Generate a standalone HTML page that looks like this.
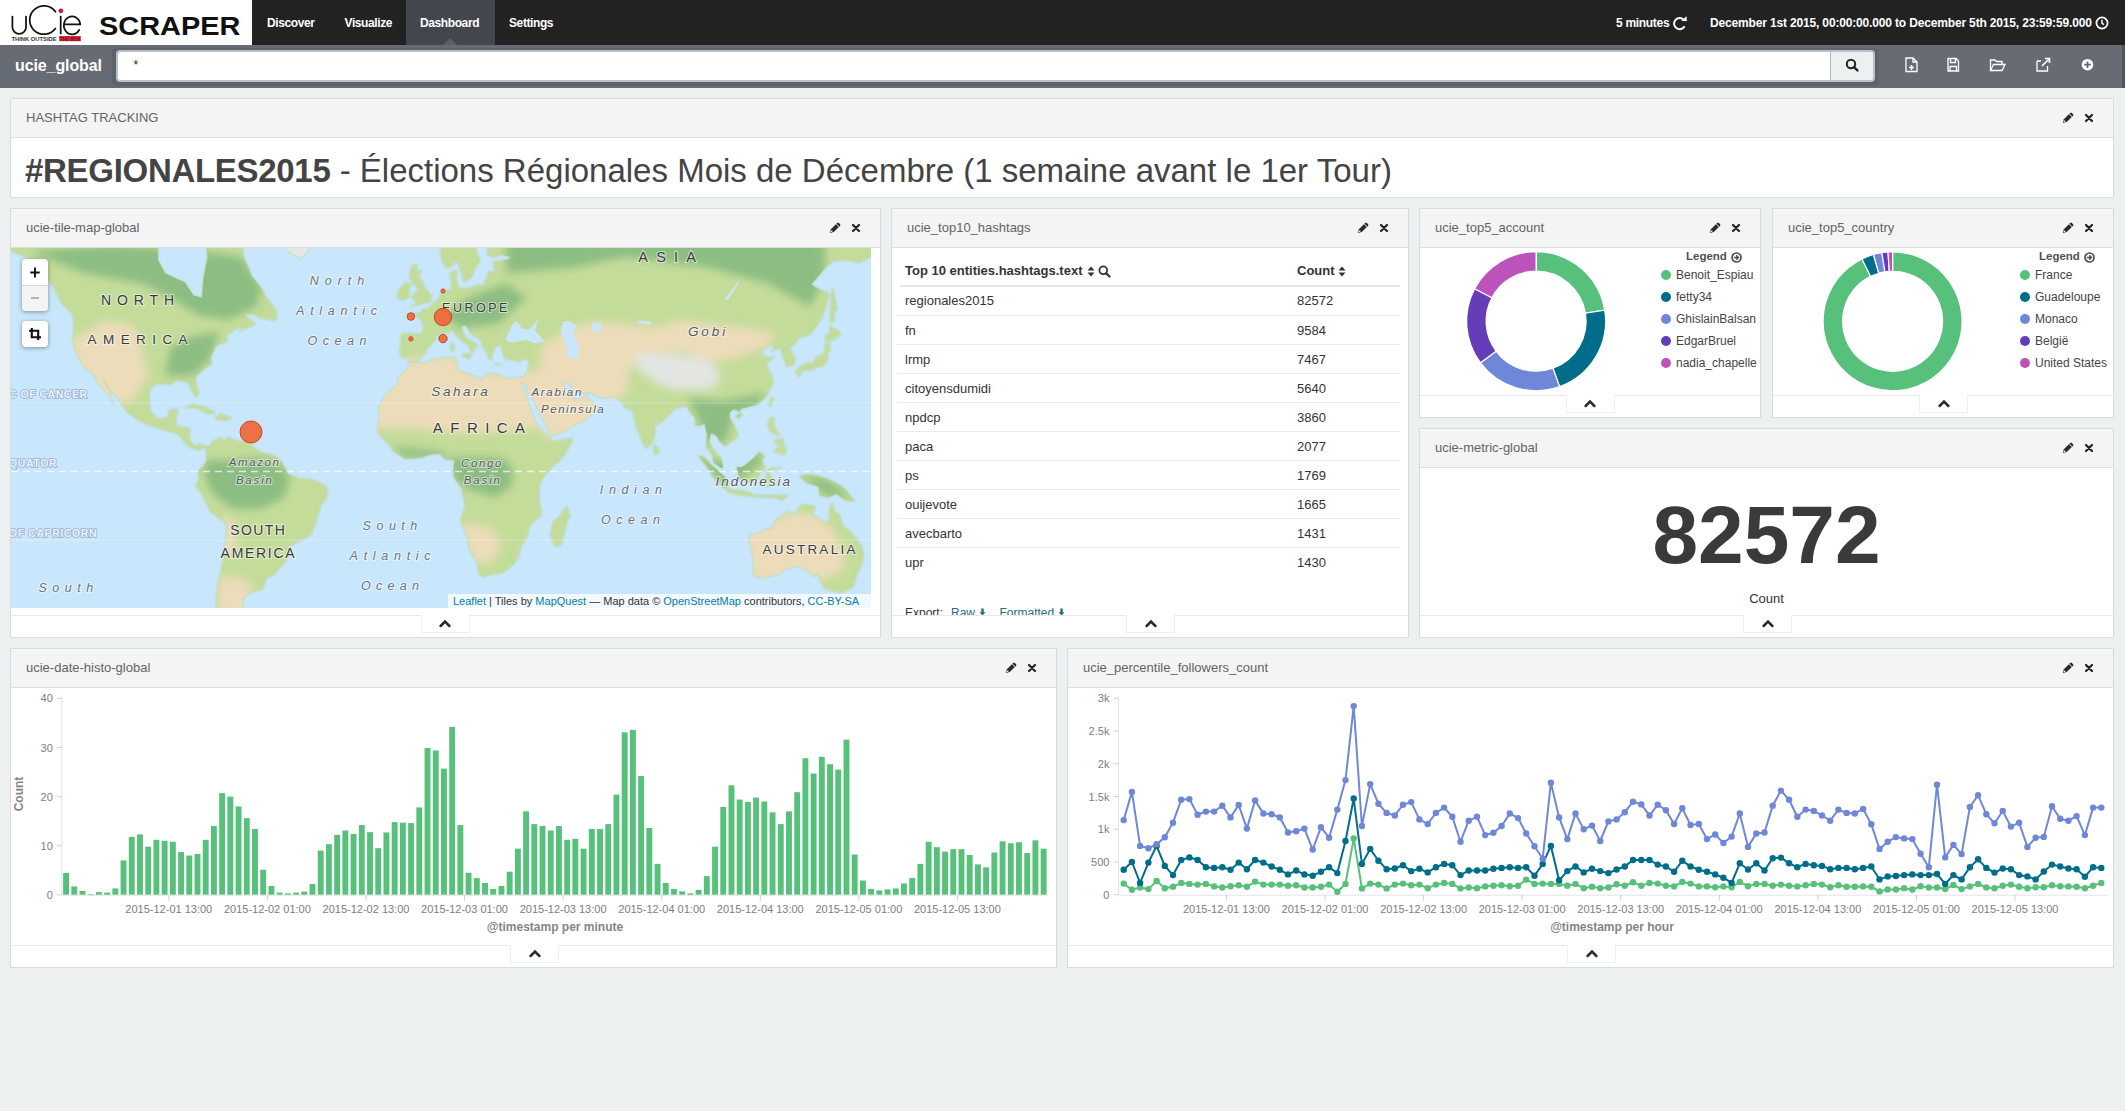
<!DOCTYPE html><html><head><meta charset="utf-8"><title>Kibana</title><style>

*{box-sizing:border-box}
html,body{margin:0;padding:0}
body{width:2125px;height:1111px;overflow:hidden;background:#ecf0f1;font-family:"Liberation Sans", sans-serif;position:relative;color:#444}
.a{position:absolute}
.nav{left:0;top:0;width:2125px;height:45px;background:#222}
.logo{left:0;top:0;width:252px;height:45px;background:#fff}
.ni{position:absolute;top:0.5px;height:45px;line-height:45px;color:#fff;font-weight:bold;font-size:12px;letter-spacing:-0.4px;white-space:nowrap}
.sub{left:0;top:45px;width:2125px;height:43px;background:#676b74}
.panel{position:absolute;background:#fff;border:1px solid #d9dcdd}
.ph{position:absolute;left:0;top:0;right:0;height:39px;background:#f4f4f4;border-bottom:1px solid #dcdfe0;box-shadow:inset 0 2px 0 #f6f8f8}
.pt{position:absolute;left:15px;top:11px;font-size:13px;color:#606466;white-space:nowrap}
.pic{position:absolute;top:13px;width:12px;height:12px;line-height:0}
.fline{position:absolute;left:0;right:0;height:1px;background:#e8eaea}
.ctab{position:absolute;width:49px;height:18px;background:#fff;border:1px solid #eef0f0;border-top:none;text-align:center;line-height:0;padding-top:4px}
.tbl{position:absolute;font-size:13px;color:#333}
.row{position:absolute;left:5px;width:499px;height:29px;border-top:1px solid #e6e8e8}
.row span{position:absolute;top:7px}
.lg{position:absolute;font-size:12px;color:#444;white-space:nowrap}
.dot{position:absolute;width:10px;height:10px;border-radius:5px}
.ax{font-family:"Liberation Sans", sans-serif;font-size:11px;fill:#7a7e81}

</style></head><body>
<div class="a nav"></div>
<div class="a logo">
<svg class="a" style="left:0;top:0" width="252" height="45" viewBox="0 0 252 45">
<g fill="none" stroke="#111" stroke-width="1.75" stroke-linecap="round">
<path d="M12.4 16.6 V27.2 A6.8 6.7 0 0 0 26 27.2 V16.6"/>
<path d="M55.5 11.8 A14.2 14.2 0 1 0 55.4 28.4"/>
<path d="M60.7 16.6 V33.6"/>
<path d="M63.9 24.3 H80.2 A8.2 9 0 1 0 79.2 29.8"/>
</g>
<circle cx="60.9" cy="10.8" r="2.4" fill="#c8202f"/>
<text x="11.4" y="40.7" font-family="Liberation Sans" font-size="5" font-weight="bold" textLength="45.3" lengthAdjust="spacingAndGlyphs" fill="#333">THINK OUTSIDE</text>
<rect x="59.2" y="36" width="21.6" height="5.2" fill="#d8293c"/>
<text x="59.8" y="40.6" font-family="Liberation Sans" font-size="4.8" font-weight="bold" fill="#7a0a14" textLength="20.4" lengthAdjust="spacingAndGlyphs">THE BOX</text>
<text x="99" y="34.6" font-family="Liberation Sans" font-weight="bold" font-size="26.5" textLength="141.5" lengthAdjust="spacingAndGlyphs" fill="#111">SCRAPER</text>
</svg>
</div>
<div class="a" style="left:406px;top:0;width:89px;height:45px;background:#43464d"></div>
<svg class="a" style="left:442px;top:38px" width="16" height="8"><path d="M0 8 L8 0 L16 8 Z" fill="#5b5f67"/></svg>
<div class="ni" style="left:267px">Discover</div>
<div class="ni" style="left:344.5px">Visualize</div>
<div class="ni" style="left:420px">Dashboard</div>
<div class="ni" style="left:509px">Settings</div>
<div class="ni" style="left:1616px;letter-spacing:-0.3px">5 minutes</div>
<svg class="a" style="left:1672px;top:15px" width="16" height="16" viewBox="0 0 16 16"><path d="M12.6 11.2 A5.6 5.6 0 1 1 11.6 4.6" fill="none" stroke="#fff" stroke-width="1.9"/><path d="M9.2 5.8 L14.8 6.2 L14.6 1.2 Z" fill="#fff"/></svg>
<div class="ni" style="left:1710px;letter-spacing:-0.16px">December 1st 2015, 00:00:00.000 to December 5th 2015, 23:59:59.000</div>
<svg class="a" style="left:2095px;top:16px" width="14" height="14" viewBox="0 0 14 14"><circle cx="7" cy="7" r="5.6" fill="none" stroke="#fff" stroke-width="1.7"/><path d="M7 3.8 V7.3 L9 8.6" fill="none" stroke="#fff" stroke-width="1.5"/></svg>
<div class="a sub"></div>
<div class="a" style="left:15px;top:57px;font-size:16px;font-weight:bold;color:#fff;letter-spacing:-0.1px;white-space:nowrap">ucie_global</div>
<div class="a" style="left:112px;top:48px;width:1767px;height:38px;background:#5e626a;border-radius:4px"></div>
<div class="a" style="left:116px;top:50px;width:1715px;height:32px;background:#fff;border:2px solid #bcc0c6;border-right:none;border-radius:4px 0 0 4px"></div>
<div class="a" style="left:133.5px;top:58px;font-size:12px;color:#222">*</div>
<div class="a" style="left:1830px;top:50px;width:45px;height:32px;background:#ecf0f1;border:2px solid #bcc0c6;border-left:1px solid #b5b9bf;border-radius:0 4px 4px 0"></div>
<svg class="a" style="left:1845px;top:58px" width="15" height="15" viewBox="0 0 15 15"><circle cx="6" cy="6" r="4.2" fill="none" stroke="#222" stroke-width="2"/><path d="M9 9 L12.5 12.5" stroke="#222" stroke-width="2.4" stroke-linecap="round"/></svg>
<svg class="a" style="left:1890px;top:45px" width="235" height="43" viewBox="0 0 235 43">
<g fill="none" stroke="#fff" stroke-width="1.3">
<path d="M16 13 H23 L27 17 V26.5 H16 Z"/><path d="M23 13 V17 H27"/><path d="M21.5 20 V25 M19 22.5 H24" stroke-width="1.6"/>
<path d="M58 13.5 H66 L68.5 16 V26 H58 Z"/><path d="M60.5 13.5 V17.5 H65.5 V13.5"/><path d="M60 26 V21.5 H66.5 V26"/>
<path d="M100.5 25.5 V15 H105 L106.5 16.5 H112 V19"/><path d="M100.5 25.5 L103.5 19.5 H115 L112 25.5 Z"/>
<path d="M147 16 H151 M147 16 V26 H157.5 V21"/><path d="M152 21 L159 14 M155 13.5 H159.5 V18" stroke-width="1.6"/>
</g>
<circle cx="197.5" cy="19.7" r="5.8" fill="#fff"/><path d="M197.5 16.5 V23 M194.2 19.7 H200.8" stroke="#636770" stroke-width="1.8"/>
<rect x="232" y="0" width="3" height="43" fill="#50545b"/>
</svg>
<div class="panel" style="left:10px;top:98px;width:2104px;height:100px"><div class="ph"><span class="pt">HASHTAG TRACKING</span><span class="pic" style="right:39px;top:12.7px"><svg width="12" height="12" viewBox="0 0 12 12"><path d="M0.9 11.1 L1.9 7.3 L7.6 1.6 L10.4 4.4 L4.7 10.1 Z" fill="#2a2a2a"/><path d="M8.3 0.9 Q9.1 0.2 9.8 0.9 L11.1 2.2 Q11.8 2.9 11.1 3.7 L10.4 4.4 L7.6 1.6 Z" fill="#2a2a2a"/><path d="M7.2 2.2 L9.8 4.8" stroke="#f3f4f4" stroke-width="0.8"/><circle cx="2.6" cy="9.3" r="0.9" fill="#f3f4f4"/></svg></span><span class="pic" style="right:17.5px;top:13.6px"><svg width="10" height="10" viewBox="0 0 10 10"><path d="M2 2 L8 8 M8 2 L2 8" stroke="#222" stroke-width="2.2" stroke-linecap="round"/></svg></span></div><div class="a" style="left:14px;top:53px;font-size:33px;color:#444;white-space:nowrap"><b style="letter-spacing:-0.3px">#REGIONALES2015</b> - Élections Régionales Mois de Décembre (1 semaine avant le 1er Tour)</div></div>
<div class="panel" style="left:10px;top:208px;width:871px;height:430px"><div class="ph"><span class="pt">ucie-tile-map-global</span><span class="pic" style="right:39px;top:12.7px"><svg width="12" height="12" viewBox="0 0 12 12"><path d="M0.9 11.1 L1.9 7.3 L7.6 1.6 L10.4 4.4 L4.7 10.1 Z" fill="#2a2a2a"/><path d="M8.3 0.9 Q9.1 0.2 9.8 0.9 L11.1 2.2 Q11.8 2.9 11.1 3.7 L10.4 4.4 L7.6 1.6 Z" fill="#2a2a2a"/><path d="M7.2 2.2 L9.8 4.8" stroke="#f3f4f4" stroke-width="0.8"/><circle cx="2.6" cy="9.3" r="0.9" fill="#f3f4f4"/></svg></span><span class="pic" style="right:17.5px;top:13.6px"><svg width="10" height="10" viewBox="0 0 10 10"><path d="M2 2 L8 8 M8 2 L2 8" stroke="#222" stroke-width="2.2" stroke-linecap="round"/></svg></span></div><svg class="a" style="left:0px;top:39px" width="860" height="360" viewBox="0 0 860 360">
<defs><filter id="bl" x="-10%" y="-10%" width="120%" height="120%"><feGaussianBlur stdDeviation="4"/></filter>
<filter id="bl2"><feGaussianBlur stdDeviation="1"/></filter>
<clipPath id="lc"><path d="M-11.0 -8.9L0.4 3.2L17.5 10.1L28.9 20.0L43.1 40.4L51.6 56.7L61.6 65.9L63.0 75.9L61.6 91.7L63.6 101.1L67.3 108.4L72.7 118.9L82.3 125.1L86.3 134.1L91.4 140.6L97.1 145.4L103.1 156.7L101.4 151.7L96.6 139.0L89.4 128.8L95.7 135.7L100.0 142.2L107.1 150.1L115.6 164.0L128.4 173.0L141.2 178.4L154.0 181.9L166.8 186.3L171.9 192.1L178.2 199.3L188.1 202.2L195.3 199.3L194.4 197.0L189.6 196.5L183.9 197.9L178.2 192.1L178.8 180.4L165.4 178.1L164.8 173.0L166.8 161.0L158.6 161.9L156.9 169.7L146.9 170.9L138.9 162.5L138.4 148.5L138.9 141.2L146.0 135.7L159.7 136.7L165.4 132.4L176.8 134.1L180.5 142.2L185.3 149.8L188.1 145.4L184.2 132.4L185.9 127.4L193.8 120.7L200.9 116.2L199.5 110.2L205.2 97.4L216.6 93.6L215.2 87.9L225.1 80.8L233.7 77.9L228.0 83.9L245.0 75.9L232.2 65.4L247.9 67.6L256.4 52.1L250.7 40.4L240.8 27.9L232.2 7.3L230.8 -8.9L193.8 -8.9L196.7 9.0L192.4 30.5L191.0 49.8L182.5 47.5L173.9 34.5L154.0 25.3L146.9 11.8L146.9 -8.9ZM246.5 69.3L264.9 73.0L265.5 63.3L257.8 51.7L250.7 56.7ZM267.8 -8.9L274.9 0.2L279.2 4.4L290.5 10.1L296.2 3.2L301.9 -8.9ZM173.9 159.7L182.5 156.0L195.3 159.4L204.6 164.9L195.3 165.8L186.7 160.0L175.3 160.0ZM203.8 170.0L208.9 165.8L221.4 169.7L213.7 172.7L204.4 170.9ZM195.3 199.3L199.5 197.0L200.9 193.6L210.9 189.2L212.3 193.6L216.6 189.2L228.0 193.3L239.3 193.3L242.2 199.3L250.7 204.2L262.1 207.1L269.2 211.4L273.5 218.8L277.7 226.4L289.1 230.7L301.9 231.6L316.1 238.7L316.1 249.3L309.6 258.0L304.8 274.2L300.5 286.2L293.4 290.9L280.6 297.1L277.5 308.2L270.6 318.1L263.5 326.5L255.0 330.0L252.1 341.3L238.8 344.2L230.8 351.7L232.2 356.6L225.1 371.3L222.3 388.3L219.4 411.7L205.2 411.7L200.9 379.6L205.2 359.3L206.6 337.0L212.3 313.1L215.2 290.9L216.0 277.2L199.5 263.8L191.0 246.4L184.7 237.8L188.1 230.7L186.7 223.6L191.6 218.5L195.8 212.2L195.3 203.6ZM398.9 114.4L412.9 115.5L424.2 110.9L444.1 109.5L447.0 122.4L458.4 126.4L471.2 132.4L472.6 127.4L481.1 125.1L498.2 131.1L507.6 130.1L513.8 129.1L515.0 135.7L509.0 134.7L512.4 142.2L516.7 153.2L521.5 168.5L526.6 178.1L533.7 184.8L538.9 189.8L543.7 193.6L561.3 189.8L560.8 193.6L552.2 209.4L540.9 219.3L532.3 229.3L528.1 237.8L528.1 253.6L530.9 266.8L518.1 278.4L516.7 287.8L509.0 299.9L508.1 308.2L502.5 316.4L492.5 324.8L479.7 326.5L472.6 329.3L468.0 326.2L465.5 313.1L458.4 301.8L456.7 289.3L449.3 272.7L454.1 258.0L450.7 240.7L442.7 229.3L442.7 216.5L443.6 212.2L434.2 211.4L428.5 205.6L418.5 206.8L410.0 209.9L394.4 211.1L383.0 203.9L377.3 196.5L367.9 186.3L365.9 181.3L369.6 167.0L367.3 161.6L374.5 147.0L387.3 135.7L388.1 129.1L396.4 120.7ZM555.9 258.0L559.3 268.2L556.5 272.7L550.0 296.8L543.7 298.7L539.4 287.8L541.7 274.2L548.0 268.8ZM429.6 -8.9L429.9 9.0L431.6 14.6L435.6 20.0L439.9 18.9L445.6 12.9L448.4 18.4L451.3 28.9L452.7 33.5L456.4 33.0L462.1 27.4L463.5 21.1L469.2 12.9L465.5 4.4L465.2 -8.9ZM476.9 -8.9L476.3 6.1L481.1 9.5L491.1 6.7L500.7 9.5L495.3 11.8L482.5 13.5L482.5 18.4L484.8 24.3L476.9 23.2L475.4 30.5L472.0 38.4L468.3 36.5L456.1 40.4L447.0 40.4L446.7 35.5L444.7 30.5L445.9 21.6L438.7 25.3L440.2 33.0L440.2 36.0L440.7 41.4L435.6 42.8L429.4 45.6L427.1 51.7L422.8 54.0L420.3 58.0L415.7 61.1L411.7 60.6L411.1 65.0L402.3 65.4L408.6 70.5L412.3 75.9L411.4 85.9L404.3 85.9L392.9 85.1L389.2 87.9L390.7 93.6L388.7 103.7L390.4 110.2L394.7 109.5L398.6 113.0L400.3 113.4L409.4 111.2L414.3 105.9L416.3 100.7L424.8 92.1L424.5 87.5L429.4 86.3L437.0 84.7L441.3 82.4L445.6 87.9L450.7 92.9L456.9 97.0L460.9 104.8L462.9 103.3L464.6 97.8L468.3 98.9L461.2 93.6L455.5 89.8L450.7 82.0L450.7 78.3L454.7 77.5L459.8 85.9L470.9 92.5L470.9 98.1L475.4 104.8L477.4 110.9L481.1 111.9L481.1 106.6L484.0 99.3L489.7 96.3L490.2 98.1L491.1 103.0L493.4 110.2L496.2 111.2L502.5 112.3L508.1 113.4L514.1 110.9L518.1 111.9L517.5 117.2L516.7 122.4L513.8 129.1L515.0 135.7L516.7 142.2L522.4 151.7L527.2 161.0L533.7 174.5L537.4 181.9L539.4 187.2L543.7 186.9L555.1 181.9L565.0 176.0L573.6 172.1L579.8 167.0L585.8 157.9L582.1 154.5L575.8 150.7L575.8 146.0L573.6 148.5L563.6 153.2L562.2 148.5L557.9 146.0L553.7 139.6L552.2 134.1L557.9 133.4L562.2 141.2L570.7 145.1L577.8 143.8L590.6 149.5L604.9 148.9L610.5 154.8L616.2 157.0L612.0 158.5L621.9 162.5L622.8 168.5L624.8 177.5L628.5 186.9L633.3 198.5L636.1 200.5L641.8 194.1L644.1 186.3L643.8 178.1L650.4 174.5L658.9 166.1L663.2 161.0L668.9 159.4L676.0 157.9L678.2 163.4L683.9 170.0L684.2 177.5L687.3 178.1L693.6 176.0L695.9 186.3L695.3 197.9L695.9 200.8L701.0 206.5L703.0 215.1L710.1 219.9L712.1 219.3L709.8 209.9L706.7 206.5L701.0 199.3L697.9 193.6L700.1 184.8L705.8 188.3L708.7 193.6L713.8 199.0L719.5 193.9L726.3 189.8L726.6 184.8L722.9 176.6L718.6 170.0L718.6 164.6L722.9 161.0L728.6 164.0L730.0 161.0L738.5 158.8L747.1 156.3L755.6 148.5L758.5 142.2L762.7 134.1L759.9 125.8L755.6 117.2L758.5 113.0L764.1 108.7L754.2 109.5L751.3 104.8L750.8 101.9L761.3 96.3L763.6 97.4L760.4 103.7L769.3 99.6L772.1 108.4L775.5 118.9L783.5 116.5L784.1 110.2L780.6 104.4L778.4 100.0L784.9 95.5L787.5 89.8L794.0 88.6L801.1 84.7L809.7 71.8L815.3 58.9L817.9 45.2L806.8 40.4L800.3 36.5L805.4 30.5L815.3 18.9L822.5 12.9L836.7 12.4L848.1 14.6L855.2 11.2L870.8 3.2L870.8 -8.9ZM399.5 58.9L419.7 53.5L420.5 46.6L416.3 42.8L412.0 36.5L410.0 31.0L407.2 30.5L410.6 22.7L404.3 22.2L406.9 16.8L401.5 16.8L398.6 25.3L400.1 33.0L402.0 36.5L406.6 38.9L406.3 43.3L402.3 46.1L400.9 51.2L406.6 53.1ZM398.6 48.9L398.1 40.9L399.8 36.5L394.4 34.0L391.5 38.0L387.3 42.8L386.1 50.8L392.9 51.7ZM451.3 106.2L460.1 105.5L458.7 111.2L451.3 108.0ZM439.6 95.5L443.3 95.5L443.0 102.6L439.6 103.0ZM482.5 115.5L490.5 116.5L485.4 117.2ZM784.6 123.4L788.3 129.8L790.9 122.4L799.7 122.4L804.8 119.6L810.5 118.6L813.9 116.9L816.2 113.7L816.8 105.5L819.6 101.1L818.2 94.0L813.9 96.3L813.9 103.0L809.7 107.3L804.8 109.1L802.5 114.8L794.0 115.5L788.3 118.9ZM813.9 93.6L817.3 92.5L823.3 91.7L829.6 86.7L828.7 83.2L819.0 78.3L818.2 86.7L815.1 86.7ZM819.6 75.9L823.6 72.6L822.5 61.1L826.7 63.3L822.5 42.8L821.3 38.9L820.2 49.8L819.6 63.3ZM757.3 156.3L759.9 149.5L762.7 150.1L759.3 159.4ZM724.6 167.9L730.0 165.2L731.4 166.7L727.5 170.9ZM642.7 205.1L642.7 196.2L647.0 199.3L648.4 203.6L645.0 206.8ZM756.5 176.6L758.5 170.0L763.6 170.0L762.7 177.5L769.0 187.8L759.9 184.0L758.7 181.9ZM762.7 203.6L767.0 198.8L772.7 195.6L775.8 202.8L772.4 207.6L768.4 205.1ZM762.7 192.1L772.7 190.7L771.3 195.6L765.6 196.5ZM725.7 219.3L727.5 226.4L729.2 232.1L741.4 234.4L747.1 230.7L749.9 223.6L754.2 220.8L750.8 211.6L754.2 208.8L748.5 203.6L744.2 208.5L737.1 214.8L731.4 219.0ZM686.8 207.6L693.0 208.8L700.7 217.3L712.9 227.9L717.2 232.7L716.9 240.4L712.9 240.4L703.0 230.7L695.9 219.3ZM714.9 243.0L717.5 240.7L724.3 242.1L731.4 242.1L741.7 245.6L741.4 248.4L728.6 247.0L718.6 244.7ZM755.6 239.3L754.2 233.6L756.5 222.2L759.3 219.9L771.3 219.3L759.9 222.2L758.5 227.9L766.4 235.0L761.3 237.3L759.9 230.7L757.9 239.6ZM788.3 227.9L796.9 226.4L807.7 227.9L816.8 231.0L830.4 237.8L835.3 242.1L843.8 253.6L834.7 252.8L825.3 245.9L816.8 249.6L808.2 247.3L807.7 238.7L795.4 235.0L791.2 231.6ZM742.8 247.0L754.2 247.3L762.7 247.0L771.3 247.6L777.8 247.3L771.3 252.2L762.7 249.3L754.2 249.3L742.8 248.7ZM738.5 287.8L740.0 301.8L742.8 313.1L742.8 327.6L751.3 330.0L767.0 326.2L774.1 320.8L788.3 318.1L798.3 323.1L802.0 329.3L807.7 324.2L808.2 331.7L813.9 340.6L823.9 343.5L831.8 344.6L842.4 338.8L845.8 326.5L850.9 316.4L852.6 307.3L850.9 298.7L844.6 289.3L839.5 283.2L831.8 278.4L829.0 266.8L823.9 263.8L821.0 254.2L818.2 260.9L818.5 273.3L813.9 274.8L806.2 269.1L801.1 266.8L804.8 258.6L792.6 256.5L787.8 259.1L784.1 266.8L776.9 263.2L771.3 267.4L764.1 272.7L761.3 280.2L752.8 282.6L744.2 286.2ZM827.0 350.5L837.5 351.3L836.4 360.1L831.0 361.7Z"/></clipPath></defs>
<rect width="860" height="360" fill="#c8e7fc"/>
<g filter="url(#bl2)"><path d="M-11.0 -8.9L0.4 3.2L17.5 10.1L28.9 20.0L43.1 40.4L51.6 56.7L61.6 65.9L63.0 75.9L61.6 91.7L63.6 101.1L67.3 108.4L72.7 118.9L82.3 125.1L86.3 134.1L91.4 140.6L97.1 145.4L103.1 156.7L101.4 151.7L96.6 139.0L89.4 128.8L95.7 135.7L100.0 142.2L107.1 150.1L115.6 164.0L128.4 173.0L141.2 178.4L154.0 181.9L166.8 186.3L171.9 192.1L178.2 199.3L188.1 202.2L195.3 199.3L194.4 197.0L189.6 196.5L183.9 197.9L178.2 192.1L178.8 180.4L165.4 178.1L164.8 173.0L166.8 161.0L158.6 161.9L156.9 169.7L146.9 170.9L138.9 162.5L138.4 148.5L138.9 141.2L146.0 135.7L159.7 136.7L165.4 132.4L176.8 134.1L180.5 142.2L185.3 149.8L188.1 145.4L184.2 132.4L185.9 127.4L193.8 120.7L200.9 116.2L199.5 110.2L205.2 97.4L216.6 93.6L215.2 87.9L225.1 80.8L233.7 77.9L228.0 83.9L245.0 75.9L232.2 65.4L247.9 67.6L256.4 52.1L250.7 40.4L240.8 27.9L232.2 7.3L230.8 -8.9L193.8 -8.9L196.7 9.0L192.4 30.5L191.0 49.8L182.5 47.5L173.9 34.5L154.0 25.3L146.9 11.8L146.9 -8.9ZM246.5 69.3L264.9 73.0L265.5 63.3L257.8 51.7L250.7 56.7ZM267.8 -8.9L274.9 0.2L279.2 4.4L290.5 10.1L296.2 3.2L301.9 -8.9ZM173.9 159.7L182.5 156.0L195.3 159.4L204.6 164.9L195.3 165.8L186.7 160.0L175.3 160.0ZM203.8 170.0L208.9 165.8L221.4 169.7L213.7 172.7L204.4 170.9ZM195.3 199.3L199.5 197.0L200.9 193.6L210.9 189.2L212.3 193.6L216.6 189.2L228.0 193.3L239.3 193.3L242.2 199.3L250.7 204.2L262.1 207.1L269.2 211.4L273.5 218.8L277.7 226.4L289.1 230.7L301.9 231.6L316.1 238.7L316.1 249.3L309.6 258.0L304.8 274.2L300.5 286.2L293.4 290.9L280.6 297.1L277.5 308.2L270.6 318.1L263.5 326.5L255.0 330.0L252.1 341.3L238.8 344.2L230.8 351.7L232.2 356.6L225.1 371.3L222.3 388.3L219.4 411.7L205.2 411.7L200.9 379.6L205.2 359.3L206.6 337.0L212.3 313.1L215.2 290.9L216.0 277.2L199.5 263.8L191.0 246.4L184.7 237.8L188.1 230.7L186.7 223.6L191.6 218.5L195.8 212.2L195.3 203.6ZM398.9 114.4L412.9 115.5L424.2 110.9L444.1 109.5L447.0 122.4L458.4 126.4L471.2 132.4L472.6 127.4L481.1 125.1L498.2 131.1L507.6 130.1L513.8 129.1L515.0 135.7L509.0 134.7L512.4 142.2L516.7 153.2L521.5 168.5L526.6 178.1L533.7 184.8L538.9 189.8L543.7 193.6L561.3 189.8L560.8 193.6L552.2 209.4L540.9 219.3L532.3 229.3L528.1 237.8L528.1 253.6L530.9 266.8L518.1 278.4L516.7 287.8L509.0 299.9L508.1 308.2L502.5 316.4L492.5 324.8L479.7 326.5L472.6 329.3L468.0 326.2L465.5 313.1L458.4 301.8L456.7 289.3L449.3 272.7L454.1 258.0L450.7 240.7L442.7 229.3L442.7 216.5L443.6 212.2L434.2 211.4L428.5 205.6L418.5 206.8L410.0 209.9L394.4 211.1L383.0 203.9L377.3 196.5L367.9 186.3L365.9 181.3L369.6 167.0L367.3 161.6L374.5 147.0L387.3 135.7L388.1 129.1L396.4 120.7ZM555.9 258.0L559.3 268.2L556.5 272.7L550.0 296.8L543.7 298.7L539.4 287.8L541.7 274.2L548.0 268.8ZM429.6 -8.9L429.9 9.0L431.6 14.6L435.6 20.0L439.9 18.9L445.6 12.9L448.4 18.4L451.3 28.9L452.7 33.5L456.4 33.0L462.1 27.4L463.5 21.1L469.2 12.9L465.5 4.4L465.2 -8.9ZM476.9 -8.9L476.3 6.1L481.1 9.5L491.1 6.7L500.7 9.5L495.3 11.8L482.5 13.5L482.5 18.4L484.8 24.3L476.9 23.2L475.4 30.5L472.0 38.4L468.3 36.5L456.1 40.4L447.0 40.4L446.7 35.5L444.7 30.5L445.9 21.6L438.7 25.3L440.2 33.0L440.2 36.0L440.7 41.4L435.6 42.8L429.4 45.6L427.1 51.7L422.8 54.0L420.3 58.0L415.7 61.1L411.7 60.6L411.1 65.0L402.3 65.4L408.6 70.5L412.3 75.9L411.4 85.9L404.3 85.9L392.9 85.1L389.2 87.9L390.7 93.6L388.7 103.7L390.4 110.2L394.7 109.5L398.6 113.0L400.3 113.4L409.4 111.2L414.3 105.9L416.3 100.7L424.8 92.1L424.5 87.5L429.4 86.3L437.0 84.7L441.3 82.4L445.6 87.9L450.7 92.9L456.9 97.0L460.9 104.8L462.9 103.3L464.6 97.8L468.3 98.9L461.2 93.6L455.5 89.8L450.7 82.0L450.7 78.3L454.7 77.5L459.8 85.9L470.9 92.5L470.9 98.1L475.4 104.8L477.4 110.9L481.1 111.9L481.1 106.6L484.0 99.3L489.7 96.3L490.2 98.1L491.1 103.0L493.4 110.2L496.2 111.2L502.5 112.3L508.1 113.4L514.1 110.9L518.1 111.9L517.5 117.2L516.7 122.4L513.8 129.1L515.0 135.7L516.7 142.2L522.4 151.7L527.2 161.0L533.7 174.5L537.4 181.9L539.4 187.2L543.7 186.9L555.1 181.9L565.0 176.0L573.6 172.1L579.8 167.0L585.8 157.9L582.1 154.5L575.8 150.7L575.8 146.0L573.6 148.5L563.6 153.2L562.2 148.5L557.9 146.0L553.7 139.6L552.2 134.1L557.9 133.4L562.2 141.2L570.7 145.1L577.8 143.8L590.6 149.5L604.9 148.9L610.5 154.8L616.2 157.0L612.0 158.5L621.9 162.5L622.8 168.5L624.8 177.5L628.5 186.9L633.3 198.5L636.1 200.5L641.8 194.1L644.1 186.3L643.8 178.1L650.4 174.5L658.9 166.1L663.2 161.0L668.9 159.4L676.0 157.9L678.2 163.4L683.9 170.0L684.2 177.5L687.3 178.1L693.6 176.0L695.9 186.3L695.3 197.9L695.9 200.8L701.0 206.5L703.0 215.1L710.1 219.9L712.1 219.3L709.8 209.9L706.7 206.5L701.0 199.3L697.9 193.6L700.1 184.8L705.8 188.3L708.7 193.6L713.8 199.0L719.5 193.9L726.3 189.8L726.6 184.8L722.9 176.6L718.6 170.0L718.6 164.6L722.9 161.0L728.6 164.0L730.0 161.0L738.5 158.8L747.1 156.3L755.6 148.5L758.5 142.2L762.7 134.1L759.9 125.8L755.6 117.2L758.5 113.0L764.1 108.7L754.2 109.5L751.3 104.8L750.8 101.9L761.3 96.3L763.6 97.4L760.4 103.7L769.3 99.6L772.1 108.4L775.5 118.9L783.5 116.5L784.1 110.2L780.6 104.4L778.4 100.0L784.9 95.5L787.5 89.8L794.0 88.6L801.1 84.7L809.7 71.8L815.3 58.9L817.9 45.2L806.8 40.4L800.3 36.5L805.4 30.5L815.3 18.9L822.5 12.9L836.7 12.4L848.1 14.6L855.2 11.2L870.8 3.2L870.8 -8.9ZM399.5 58.9L419.7 53.5L420.5 46.6L416.3 42.8L412.0 36.5L410.0 31.0L407.2 30.5L410.6 22.7L404.3 22.2L406.9 16.8L401.5 16.8L398.6 25.3L400.1 33.0L402.0 36.5L406.6 38.9L406.3 43.3L402.3 46.1L400.9 51.2L406.6 53.1ZM398.6 48.9L398.1 40.9L399.8 36.5L394.4 34.0L391.5 38.0L387.3 42.8L386.1 50.8L392.9 51.7ZM451.3 106.2L460.1 105.5L458.7 111.2L451.3 108.0ZM439.6 95.5L443.3 95.5L443.0 102.6L439.6 103.0ZM482.5 115.5L490.5 116.5L485.4 117.2ZM784.6 123.4L788.3 129.8L790.9 122.4L799.7 122.4L804.8 119.6L810.5 118.6L813.9 116.9L816.2 113.7L816.8 105.5L819.6 101.1L818.2 94.0L813.9 96.3L813.9 103.0L809.7 107.3L804.8 109.1L802.5 114.8L794.0 115.5L788.3 118.9ZM813.9 93.6L817.3 92.5L823.3 91.7L829.6 86.7L828.7 83.2L819.0 78.3L818.2 86.7L815.1 86.7ZM819.6 75.9L823.6 72.6L822.5 61.1L826.7 63.3L822.5 42.8L821.3 38.9L820.2 49.8L819.6 63.3ZM757.3 156.3L759.9 149.5L762.7 150.1L759.3 159.4ZM724.6 167.9L730.0 165.2L731.4 166.7L727.5 170.9ZM642.7 205.1L642.7 196.2L647.0 199.3L648.4 203.6L645.0 206.8ZM756.5 176.6L758.5 170.0L763.6 170.0L762.7 177.5L769.0 187.8L759.9 184.0L758.7 181.9ZM762.7 203.6L767.0 198.8L772.7 195.6L775.8 202.8L772.4 207.6L768.4 205.1ZM762.7 192.1L772.7 190.7L771.3 195.6L765.6 196.5ZM725.7 219.3L727.5 226.4L729.2 232.1L741.4 234.4L747.1 230.7L749.9 223.6L754.2 220.8L750.8 211.6L754.2 208.8L748.5 203.6L744.2 208.5L737.1 214.8L731.4 219.0ZM686.8 207.6L693.0 208.8L700.7 217.3L712.9 227.9L717.2 232.7L716.9 240.4L712.9 240.4L703.0 230.7L695.9 219.3ZM714.9 243.0L717.5 240.7L724.3 242.1L731.4 242.1L741.7 245.6L741.4 248.4L728.6 247.0L718.6 244.7ZM755.6 239.3L754.2 233.6L756.5 222.2L759.3 219.9L771.3 219.3L759.9 222.2L758.5 227.9L766.4 235.0L761.3 237.3L759.9 230.7L757.9 239.6ZM788.3 227.9L796.9 226.4L807.7 227.9L816.8 231.0L830.4 237.8L835.3 242.1L843.8 253.6L834.7 252.8L825.3 245.9L816.8 249.6L808.2 247.3L807.7 238.7L795.4 235.0L791.2 231.6ZM742.8 247.0L754.2 247.3L762.7 247.0L771.3 247.6L777.8 247.3L771.3 252.2L762.7 249.3L754.2 249.3L742.8 248.7ZM738.5 287.8L740.0 301.8L742.8 313.1L742.8 327.6L751.3 330.0L767.0 326.2L774.1 320.8L788.3 318.1L798.3 323.1L802.0 329.3L807.7 324.2L808.2 331.7L813.9 340.6L823.9 343.5L831.8 344.6L842.4 338.8L845.8 326.5L850.9 316.4L852.6 307.3L850.9 298.7L844.6 289.3L839.5 283.2L831.8 278.4L829.0 266.8L823.9 263.8L821.0 254.2L818.2 260.9L818.5 273.3L813.9 274.8L806.2 269.1L801.1 266.8L804.8 258.6L792.6 256.5L787.8 259.1L784.1 266.8L776.9 263.2L771.3 267.4L764.1 272.7L761.3 280.2L752.8 282.6L744.2 286.2ZM827.0 350.5L837.5 351.3L836.4 360.1L831.0 361.7Z" fill="#c4dc9a" stroke="#b2cf90" stroke-width="0.6"/></g>
<g clip-path="url(#lc)"><g filter="url(#bl)">
<path d="M17.5 3.2L74.4 25.3L131.3 35.5L159.7 49.8L188.1 67.6L216.6 71.8L245.0 58.9L250.7 40.4L230.8 9.0L188.1 3.2L102.8 -2.8ZM159.7 99.3L182.5 87.9L208.1 83.9L199.5 110.2L182.5 127.4L154.0 127.4ZM193.8 212.2L216.6 212.2L245.0 209.4L267.8 215.1L279.2 229.3L273.5 249.3L250.7 260.9L222.3 260.9L202.4 246.4L193.8 229.3ZM438.5 209.4L461.2 209.4L489.7 209.4L501.0 217.9L501.0 237.8L484.0 249.3L455.5 240.7L441.3 229.3ZM381.6 197.9L401.5 200.8L429.9 203.6L438.5 209.4L392.9 209.4ZM495.3 25.3L557.9 20.0L614.8 9.0L700.1 20.0L757.0 35.5L799.7 58.9L813.9 25.3L813.9 -8.9L495.3 -8.9ZM677.4 150.1L711.5 153.2L742.8 147.0L754.2 143.8L745.7 159.4L722.9 165.5L714.4 195.0L694.5 195.0L688.8 174.5ZM685.9 209.4L714.4 237.8L728.6 232.1L751.3 215.1L748.5 203.6L722.9 215.1ZM788.3 226.4L816.8 232.1L842.4 252.2L813.9 246.4ZM429.9 67.6L458.4 49.8L495.3 35.5L515.3 49.8L486.8 75.9L449.8 80.0Z" fill="#86ba80" opacity="0.9"/>
<path d="M358.8 165.5L358.8 140.6L381.6 124.1L398.6 110.2L444.1 106.6L449.8 120.7L472.6 124.1L506.7 124.1L518.1 134.1L523.8 159.4L529.5 177.5L512.4 181.9L486.8 183.4L458.4 184.8L429.9 183.4L401.5 180.4L364.5 180.4ZM509.6 124.1L535.2 120.7L552.2 130.8L563.6 143.8L580.7 150.1L589.2 159.4L575.0 180.4L540.9 192.1L529.5 183.4L518.1 159.4L509.6 140.6ZM529.5 99.3L557.9 80.0L586.4 73.8L614.8 75.9L643.3 80.0L671.7 71.8L700.1 75.9L734.3 80.0L762.7 83.9L757.0 99.3L722.9 110.2L700.1 113.7L671.7 103.0L643.3 106.6L620.5 113.7L614.8 147.0L592.1 156.3L575.0 150.1L552.2 137.3L529.5 120.7ZM734.3 281.7L757.0 275.7L779.8 263.8L802.5 266.8L813.9 272.7L825.3 287.8L833.8 306.6L831.0 323.1L808.2 333.5L785.5 323.1L757.0 333.5L740.0 330.0L734.3 300.2ZM60.1 91.7L97.1 71.8L125.6 80.0L136.9 127.4L119.9 153.2L97.1 159.4L80.1 134.1L63.0 113.7ZM210.9 326.5L239.3 333.5L239.3 363.3L228.0 388.3L210.9 388.3L205.2 347.9ZM210.9 269.7L222.3 269.7L225.1 306.6L210.9 306.6ZM449.8 275.7L478.3 278.7L489.7 294.0L484.0 313.1L464.1 316.4L455.5 294.0Z" fill="#eddcbb" opacity="0.97"/>
<path d="M620.5 113.7L631.9 104.8L657.5 106.6L685.9 108.4L703.0 115.5L710.1 130.8L700.1 142.2L685.9 141.2L666.0 143.1L648.9 138.0L631.9 125.8Z" fill="#e2e5e1" opacity="1"/>
</g></g>
<path d="M494.8 91.7L496.8 85.9L500.5 77.9L503.9 73.4L509.6 75.9L509.6 80.0L516.7 81.6L520.9 78.7L527.5 70.9L523.8 82.8L533.7 93.6L523.8 95.5L515.3 91.7L506.7 93.6L498.2 94.8ZM549.4 82.0L552.2 73.8L557.9 73.0L566.5 78.7L560.8 83.9L565.0 91.7L568.7 97.4L566.5 104.8L569.3 109.1L560.8 111.2L555.1 106.6L556.5 98.1L552.2 89.8ZM580.7 73.8L590.6 75.9L589.2 84.7L582.1 83.9ZM626.2 72.6L640.4 73.8L639.0 76.7L626.2 75.1ZM712.9 51.2L715.8 48.9L725.7 35.5L728.6 30.5L727.2 35.5L717.2 52.1Z" fill="#c8e7fc"/>
<path d="M267.8 -8.9L274.9 0.2L279.2 4.4L290.5 10.1L296.2 3.2L301.9 -8.9Z" fill="#e3e8e2"/>
<line x1="0" y1="223.6" x2="860" y2="223.6" stroke="#fff" stroke-opacity="0.7" stroke-width="1.5" stroke-dasharray="7 5"/>
<line x1="0" y1="155.0" x2="860" y2="155.0" stroke="#fff" stroke-opacity="0.3" stroke-width="1"/>
<line x1="0" y1="292.2" x2="860" y2="292.2" stroke="#fff" stroke-opacity="0.3" stroke-width="1"/>
<g font-family="Liberation Sans"><text x="90.1" y="56.5" font-size="14" textLength="73" lengthAdjust="spacing" font-style="normal" fill="#3a3a3a" stroke="#fff" stroke-width="2.2" stroke-opacity="0.55" paint-order="stroke">NORTH</text><text x="76.6" y="96.4" font-size="13.5" textLength="100" lengthAdjust="spacing" font-style="normal" fill="#3a3a3a" stroke="#fff" stroke-width="2.2" stroke-opacity="0.55" paint-order="stroke">AMERICA</text><text x="219.3" y="286.8" font-size="14" textLength="54.5" lengthAdjust="spacing" font-style="normal" fill="#3a3a3a" stroke="#fff" stroke-width="2.2" stroke-opacity="0.55" paint-order="stroke">SOUTH</text><text x="209.6" y="309.5" font-size="14" textLength="74" lengthAdjust="spacing" font-style="normal" fill="#3a3a3a" stroke="#fff" stroke-width="2.2" stroke-opacity="0.55" paint-order="stroke">AMERICA</text><text x="627.3" y="14.0" font-size="14.5" textLength="57.7" lengthAdjust="spacing" font-style="normal" fill="#3a3a3a" stroke="#fff" stroke-width="2.2" stroke-opacity="0.55" paint-order="stroke">ASIA</text><text x="431.1" y="63.8" font-size="12.5" textLength="65.3" lengthAdjust="spacing" font-style="normal" fill="#3a3a3a" stroke="#fff" stroke-width="2.2" stroke-opacity="0.55" paint-order="stroke">EUROPE</text><text x="421.8" y="185.0" font-size="15" textLength="92.3" lengthAdjust="spacing" font-style="normal" fill="#3a3a3a" stroke="#fff" stroke-width="2.2" stroke-opacity="0.55" paint-order="stroke">AFRICA</text><text x="751.4" y="306.0" font-size="13.5" textLength="93" lengthAdjust="spacing" font-style="normal" fill="#3a3a3a" stroke="#fff" stroke-width="2.2" stroke-opacity="0.55" paint-order="stroke">AUSTRALIA</text><text x="298.7" y="37.3" font-size="12.5" textLength="54.5" lengthAdjust="spacing" font-style="italic" fill="#6b757b" stroke="#fff" stroke-width="2.2" stroke-opacity="0.55" paint-order="stroke">North</text><text x="285.1" y="67.4" font-size="12.5" textLength="81" lengthAdjust="spacing" font-style="italic" fill="#6b757b" stroke="#fff" stroke-width="2.2" stroke-opacity="0.55" paint-order="stroke">Atlantic</text><text x="296.5" y="97.2" font-size="12.5" textLength="59" lengthAdjust="spacing" font-style="italic" fill="#6b757b" stroke="#fff" stroke-width="2.2" stroke-opacity="0.55" paint-order="stroke">Ocean</text><text x="351.6" y="282.0" font-size="12.5" textLength="54.7" lengthAdjust="spacing" font-style="italic" fill="#6b757b" stroke="#fff" stroke-width="2.2" stroke-opacity="0.55" paint-order="stroke">South</text><text x="338.6" y="311.7" font-size="12.5" textLength="81" lengthAdjust="spacing" font-style="italic" fill="#6b757b" stroke="#fff" stroke-width="2.2" stroke-opacity="0.55" paint-order="stroke">Atlantic</text><text x="350.0" y="342.0" font-size="12.5" textLength="58" lengthAdjust="spacing" font-style="italic" fill="#6b757b" stroke="#fff" stroke-width="2.2" stroke-opacity="0.55" paint-order="stroke">Ocean</text><text x="27.5" y="344.0" font-size="12.5" textLength="54.8" lengthAdjust="spacing" font-style="italic" fill="#6b757b" stroke="#fff" stroke-width="2.2" stroke-opacity="0.55" paint-order="stroke">South</text><text x="588.8" y="246.0" font-size="12.5" textLength="62.2" lengthAdjust="spacing" font-style="italic" fill="#6b757b" stroke="#fff" stroke-width="2.2" stroke-opacity="0.55" paint-order="stroke">Indian</text><text x="590.0" y="276.0" font-size="12.5" textLength="59" lengthAdjust="spacing" font-style="italic" fill="#6b757b" stroke="#fff" stroke-width="2.2" stroke-opacity="0.55" paint-order="stroke">Ocean</text><text x="420.3" y="148.0" font-size="13.5" textLength="56.5" lengthAdjust="spacing" font-style="italic" fill="#555a5c" stroke="#fff" stroke-width="2.2" stroke-opacity="0.55" paint-order="stroke">Sahara</text><text x="520.4" y="148.4" font-size="11.5" textLength="50" lengthAdjust="spacing" font-style="italic" fill="#555a5c" stroke="#fff" stroke-width="2.2" stroke-opacity="0.55" paint-order="stroke">Arabian</text><text x="530.1" y="165.0" font-size="11.5" textLength="62.5" lengthAdjust="spacing" font-style="italic" fill="#555a5c" stroke="#fff" stroke-width="2.2" stroke-opacity="0.55" paint-order="stroke">Peninsula</text><text x="676.9" y="88.0" font-size="13.5" textLength="37.3" lengthAdjust="spacing" font-style="italic" fill="#555a5c" stroke="#fff" stroke-width="2.2" stroke-opacity="0.55" paint-order="stroke">Gobi</text><text x="217.7" y="217.5" font-size="11.5" textLength="50.3" lengthAdjust="spacing" font-style="italic" fill="#555a5c" stroke="#fff" stroke-width="2.2" stroke-opacity="0.55" paint-order="stroke">Amazon</text><text x="224.9" y="236.0" font-size="11.5" textLength="36" lengthAdjust="spacing" font-style="italic" fill="#555a5c" stroke="#fff" stroke-width="2.2" stroke-opacity="0.55" paint-order="stroke">Basin</text><text x="450.0" y="218.5" font-size="11.5" textLength="40.5" lengthAdjust="spacing" font-style="italic" fill="#555a5c" stroke="#fff" stroke-width="2.2" stroke-opacity="0.55" paint-order="stroke">Congo</text><text x="452.7" y="236.0" font-size="11.5" textLength="36.3" lengthAdjust="spacing" font-style="italic" fill="#555a5c" stroke="#fff" stroke-width="2.2" stroke-opacity="0.55" paint-order="stroke">Basin</text><text x="704.4" y="238.0" font-size="13.5" textLength="74.6" lengthAdjust="spacing" font-style="italic" fill="#555a5c" stroke="#fff" stroke-width="2.2" stroke-opacity="0.55" paint-order="stroke">Indonesia</text><text x="-2.0" y="150.0" font-size="10.5" font-weight="bold" textLength="78" lengthAdjust="spacing" fill="#eef4fb" stroke="#93acd2" stroke-width="1.6" paint-order="stroke">C OF CANCER</text><text x="-2.0" y="218.5" font-size="10.5" font-weight="bold" textLength="47.5" lengthAdjust="spacing" fill="#eef4fb" stroke="#93acd2" stroke-width="1.6" paint-order="stroke">QUATOR</text><text x="-2.0" y="288.5" font-size="10.5" font-weight="bold" textLength="87.5" lengthAdjust="spacing" fill="#eef4fb" stroke="#93acd2" stroke-width="1.6" paint-order="stroke">OF CAPRICORN</text></g>
<circle cx="240" cy="184" r="11" fill="#ee6a3a" stroke="#c9462a" stroke-width="1" fill-opacity="0.95"/><circle cx="432" cy="69" r="8.7" fill="#ee6a3a" stroke="#c9462a" stroke-width="1" fill-opacity="0.95"/><circle cx="399.9" cy="68.5" r="3.8" fill="#ee6a3a" stroke="#c9462a" stroke-width="1" fill-opacity="0.95"/><circle cx="432" cy="43" r="2.1" fill="#ee6a3a" stroke="#c9462a" stroke-width="1" fill-opacity="0.95"/><circle cx="399.9" cy="90.80000000000001" r="2.1" fill="#ee6a3a" stroke="#c9462a" stroke-width="1" fill-opacity="0.95"/><circle cx="432" cy="90.60000000000002" r="4.2" fill="#ee6a3a" stroke="#c9462a" stroke-width="1" fill-opacity="0.95"/>
</svg><div class="a" style="left:0;top:39px;width:860px;height:360px"><div class="a" style="left:11px;top:10.5px;width:26px;height:52.5px;background:#fff;border-radius:4px;box-shadow:0 1px 4px rgba(0,0,0,0.38);overflow:hidden">
<div class="a" style="left:0;top:26px;width:26px;height:26.5px;background:#f4f4f4;border-top:1px solid #d6d6d6"></div>
<svg class="a" style="left:8px;top:8px" width="10" height="11" viewBox="0 0 10 11"><path d="M5 0.5 V10.5 M0.3 5.5 H9.7" stroke="#111" stroke-width="1.9"/></svg>
<div class="a" style="left:8.5px;top:38.5px;width:8.5px;height:1.5px;background:#b5b5b5"></div></div>
<div class="a" style="left:11px;top:72.5px;width:26px;height:26.5px;background:#fff;border-radius:4px;box-shadow:0 1px 4px rgba(0,0,0,0.38)">
<svg class="a" style="left:6px;top:6px" width="14" height="14" viewBox="0 0 14 14"><path d="M3.8 1 V10.2 H13 M1 3.8 H10.2 V13" fill="none" stroke="#111" stroke-width="2.1"/></svg></div><div class="a" style="left:436.5px;top:346px;width:424px;height:14px;background:rgba(255,255,255,0.78)"></div><div class="a" style="left:442px;top:346px;font-size:11px;color:#333;white-space:nowrap;line-height:14px"><span style="color:#0a7ba6">Leaflet</span> | Tiles by <span style="color:#0a7ba6">MapQuest</span> — Map data © <span style="color:#0a7ba6">OpenStreetMap</span> contributors, <span style="color:#0a7ba6">CC-BY-SA</span></div></div><div class="fline" style="top:406px"></div><div class="ctab" style="left:409.5px;top:406px"><svg width="14" height="9" viewBox="0 0 14 9"><path d="M2.6 7 L7 2.6 L11.4 7" fill="none" stroke="#2b2b2b" stroke-width="2.5" stroke-linecap="round" stroke-linejoin="miter"/></svg></div></div>
<div class="panel" style="left:891px;top:208px;width:518px;height:430px"><div class="ph"><span class="pt">ucie_top10_hashtags</span><span class="pic" style="right:39px;top:12.7px"><svg width="12" height="12" viewBox="0 0 12 12"><path d="M0.9 11.1 L1.9 7.3 L7.6 1.6 L10.4 4.4 L4.7 10.1 Z" fill="#2a2a2a"/><path d="M8.3 0.9 Q9.1 0.2 9.8 0.9 L11.1 2.2 Q11.8 2.9 11.1 3.7 L10.4 4.4 L7.6 1.6 Z" fill="#2a2a2a"/><path d="M7.2 2.2 L9.8 4.8" stroke="#f3f4f4" stroke-width="0.8"/><circle cx="2.6" cy="9.3" r="0.9" fill="#f3f4f4"/></svg></span><span class="pic" style="right:17.5px;top:13.6px"><svg width="10" height="10" viewBox="0 0 10 10"><path d="M2 2 L8 8 M8 2 L2 8" stroke="#222" stroke-width="2.2" stroke-linecap="round"/></svg></span></div><div class="a" style="left:13px;top:54px;font-size:13px;font-weight:bold;color:#333;white-space:nowrap">Top 10 entities.hashtags.text</div><svg class="a" style="left:195px;top:57px" width="8" height="11" viewBox="0 0 8 11"><path d="M0.5 4.5 L4 0.5 L7.5 4.5 Z M0.5 6.5 L4 10.5 L7.5 6.5 Z" fill="#333"/></svg><svg class="a" style="left:206px;top:56px" width="13" height="13" viewBox="0 0 13 13"><circle cx="5.3" cy="5.3" r="3.9" fill="none" stroke="#333" stroke-width="1.8"/><path d="M8.2 8.2 L11.5 11.5" stroke="#333" stroke-width="2.2" stroke-linecap="round"/></svg><div class="a" style="left:405px;top:54px;font-size:13px;font-weight:bold;color:#333">Count</div><svg class="a" style="left:446px;top:57px" width="8" height="11" viewBox="0 0 8 11"><path d="M0.5 4.5 L4 0.5 L7.5 4.5 Z M0.5 6.5 L4 10.5 L7.5 6.5 Z" fill="#333"/></svg><div class="a" style="left:8px;top:76px;width:500px;height:2px;background:#e6e8e8"></div><div class="a" style="left:5px;top:77px;width:503px;height:29px;border-top:none;font-size:13px;color:#333"><span class="a" style="left:8px;top:7px">regionales2015</span><span class="a" style="left:400px;top:7px">82572</span></div><div class="a" style="left:5px;top:106px;width:503px;height:29px;border-top:1px solid #e9ebeb;font-size:13px;color:#333"><span class="a" style="left:8px;top:7px">fn</span><span class="a" style="left:400px;top:7px">9584</span></div><div class="a" style="left:5px;top:135px;width:503px;height:29px;border-top:1px solid #e9ebeb;font-size:13px;color:#333"><span class="a" style="left:8px;top:7px">lrmp</span><span class="a" style="left:400px;top:7px">7467</span></div><div class="a" style="left:5px;top:164px;width:503px;height:29px;border-top:1px solid #e9ebeb;font-size:13px;color:#333"><span class="a" style="left:8px;top:7px">citoyensdumidi</span><span class="a" style="left:400px;top:7px">5640</span></div><div class="a" style="left:5px;top:193px;width:503px;height:29px;border-top:1px solid #e9ebeb;font-size:13px;color:#333"><span class="a" style="left:8px;top:7px">npdcp</span><span class="a" style="left:400px;top:7px">3860</span></div><div class="a" style="left:5px;top:222px;width:503px;height:29px;border-top:1px solid #e9ebeb;font-size:13px;color:#333"><span class="a" style="left:8px;top:7px">paca</span><span class="a" style="left:400px;top:7px">2077</span></div><div class="a" style="left:5px;top:251px;width:503px;height:29px;border-top:1px solid #e9ebeb;font-size:13px;color:#333"><span class="a" style="left:8px;top:7px">ps</span><span class="a" style="left:400px;top:7px">1769</span></div><div class="a" style="left:5px;top:280px;width:503px;height:29px;border-top:1px solid #e9ebeb;font-size:13px;color:#333"><span class="a" style="left:8px;top:7px">ouijevote</span><span class="a" style="left:400px;top:7px">1665</span></div><div class="a" style="left:5px;top:309px;width:503px;height:29px;border-top:1px solid #e9ebeb;font-size:13px;color:#333"><span class="a" style="left:8px;top:7px">avecbarto</span><span class="a" style="left:400px;top:7px">1431</span></div><div class="a" style="left:5px;top:338px;width:503px;height:29px;border-top:1px solid #e9ebeb;font-size:13px;color:#333"><span class="a" style="left:8px;top:7px">upr</span><span class="a" style="left:400px;top:7px">1430</span></div><div class="a" style="left:0;top:391px;width:516px;height:15px;overflow:hidden"><div class="a" style="left:13px;top:5.5px;font-size:12px;color:#333;white-space:nowrap">Export:</div><div class="a" style="left:59px;top:5.5px;font-size:12px;color:#2a6b7c;white-space:nowrap">Raw</div><svg class="a" style="left:85px;top:8px" width="11" height="10" viewBox="0 0 11 10"><path d="M4.3 0.5 H6.7 V4.3 H8.6 L5.5 7.4 L2.4 4.3 H4.3 Z" fill="#2a6b7c"/><rect x="0.5" y="8.3" width="10" height="1.6" fill="#2a6b7c"/></svg><div class="a" style="left:107.5px;top:5.5px;font-size:12px;color:#2a6b7c;white-space:nowrap">Formatted</div><svg class="a" style="left:164px;top:8px" width="11" height="10" viewBox="0 0 11 10"><path d="M4.3 0.5 H6.7 V4.3 H8.6 L5.5 7.4 L2.4 4.3 H4.3 Z" fill="#2a6b7c"/><rect x="0.5" y="8.3" width="10" height="1.6" fill="#2a6b7c"/></svg></div><div class="fline" style="top:406px"></div><div class="ctab" style="left:234.0px;top:406px"><svg width="14" height="9" viewBox="0 0 14 9"><path d="M2.6 7 L7 2.6 L11.4 7" fill="none" stroke="#2b2b2b" stroke-width="2.5" stroke-linecap="round" stroke-linejoin="miter"/></svg></div></div>
<div class="panel" style="left:1419px;top:208px;width:342px;height:210px"><div class="ph"><span class="pt">ucie_top5_account</span><span class="pic" style="right:39px;top:12.7px"><svg width="12" height="12" viewBox="0 0 12 12"><path d="M0.9 11.1 L1.9 7.3 L7.6 1.6 L10.4 4.4 L4.7 10.1 Z" fill="#2a2a2a"/><path d="M8.3 0.9 Q9.1 0.2 9.8 0.9 L11.1 2.2 Q11.8 2.9 11.1 3.7 L10.4 4.4 L7.6 1.6 Z" fill="#2a2a2a"/><path d="M7.2 2.2 L9.8 4.8" stroke="#f3f4f4" stroke-width="0.8"/><circle cx="2.6" cy="9.3" r="0.9" fill="#f3f4f4"/></svg></span><span class="pic" style="right:17.5px;top:13.6px"><svg width="10" height="10" viewBox="0 0 10 10"><path d="M2 2 L8 8 M8 2 L2 8" stroke="#222" stroke-width="2.2" stroke-linecap="round"/></svg></span></div><svg class="a" style="left:0;top:0" width="340" height="208"><path d="M116.10 42.70 A69.5 69.5 0 0 1 184.71 101.09 L165.46 104.21 A50 50 0 0 0 116.10 62.20 Z" fill="#57c17b" stroke="#fff" stroke-width="1.2"/><path d="M184.71 101.09 A69.5 69.5 0 0 1 139.53 177.63 L132.95 159.27 A50 50 0 0 0 165.46 104.21 Z" fill="#006e8a" stroke="#fff" stroke-width="1.2"/><path d="M139.53 177.63 A69.5 69.5 0 0 1 60.45 153.83 L76.06 142.15 A50 50 0 0 0 132.95 159.27 Z" fill="#6f87d8" stroke="#fff" stroke-width="1.2"/><path d="M60.45 153.83 A69.5 69.5 0 0 1 54.68 79.68 L71.91 88.80 A50 50 0 0 0 76.06 142.15 Z" fill="#663db8" stroke="#fff" stroke-width="1.2"/><path d="M54.68 79.68 A69.5 69.5 0 0 1 116.10 42.70 L116.10 62.20 A50 50 0 0 0 71.91 88.80 Z" fill="#bc52bc" stroke="#fff" stroke-width="1.2"/></svg><div class="lg" style="left:266px;top:41px;font-weight:bold;font-size:11.5px;color:#505050">Legend</div><svg class="a" style="left:310.5px;top:42.5px" width="11" height="11" viewBox="0 0 11 11"><circle cx="5.5" cy="5.5" r="4.5" fill="none" stroke="#505050" stroke-width="1.7"/><path d="M2.8 5.5 H7.2 M5.3 3.4 L7.4 5.5 L5.3 7.6" fill="none" stroke="#505050" stroke-width="1.5"/></svg><div class="dot" style="left:241px;top:61px;background:#57c17b"></div><div class="lg" style="left:256px;top:59px">Benoit_Espiau</div><div class="dot" style="left:241px;top:83px;background:#006e8a"></div><div class="lg" style="left:256px;top:81px">fetty34</div><div class="dot" style="left:241px;top:105px;background:#6f87d8"></div><div class="lg" style="left:256px;top:103px">GhislainBalsan</div><div class="dot" style="left:241px;top:127px;background:#663db8"></div><div class="lg" style="left:256px;top:125px">EdgarBruel</div><div class="dot" style="left:241px;top:149px;background:#bc52bc"></div><div class="lg" style="left:256px;top:147px">nadia_chapelle</div><div class="fline" style="top:186px"></div><div class="ctab" style="left:145.7px;top:186px"><svg width="14" height="9" viewBox="0 0 14 9"><path d="M2.6 7 L7 2.6 L11.4 7" fill="none" stroke="#2b2b2b" stroke-width="2.5" stroke-linecap="round" stroke-linejoin="miter"/></svg></div></div>
<div class="panel" style="left:1772px;top:208px;width:342px;height:210px"><div class="ph"><span class="pt">ucie_top5_country</span><span class="pic" style="right:39px;top:12.7px"><svg width="12" height="12" viewBox="0 0 12 12"><path d="M0.9 11.1 L1.9 7.3 L7.6 1.6 L10.4 4.4 L4.7 10.1 Z" fill="#2a2a2a"/><path d="M8.3 0.9 Q9.1 0.2 9.8 0.9 L11.1 2.2 Q11.8 2.9 11.1 3.7 L10.4 4.4 L7.6 1.6 Z" fill="#2a2a2a"/><path d="M7.2 2.2 L9.8 4.8" stroke="#f3f4f4" stroke-width="0.8"/><circle cx="2.6" cy="9.3" r="0.9" fill="#f3f4f4"/></svg></span><span class="pic" style="right:17.5px;top:13.6px"><svg width="10" height="10" viewBox="0 0 10 10"><path d="M2 2 L8 8 M8 2 L2 8" stroke="#222" stroke-width="2.2" stroke-linecap="round"/></svg></span></div><svg class="a" style="left:0;top:0" width="340" height="208"><path d="M119.60 42.80 A69.5 69.5 0 1 1 89.02 49.89 L97.60 67.40 A50 50 0 1 0 119.60 62.30 Z" fill="#57c17b" stroke="#fff" stroke-width="1.2"/><path d="M89.02 49.89 A69.5 69.5 0 0 1 100.44 45.49 L105.82 64.24 A50 50 0 0 0 97.60 67.40 Z" fill="#006e8a" stroke="#fff" stroke-width="1.2"/><path d="M100.44 45.49 A69.5 69.5 0 0 1 108.85 43.64 L111.86 62.90 A50 50 0 0 0 105.82 64.24 Z" fill="#6f87d8" stroke="#fff" stroke-width="1.2"/><path d="M108.85 43.64 A69.5 69.5 0 0 1 114.99 42.95 L116.29 62.41 A50 50 0 0 0 111.86 62.90 Z" fill="#663db8" stroke="#fff" stroke-width="1.2"/><path d="M114.99 42.95 A69.5 69.5 0 0 1 119.60 42.80 L119.60 62.30 A50 50 0 0 0 116.29 62.41 Z" fill="#bc52bc" stroke="#fff" stroke-width="1.2"/></svg><div class="lg" style="left:266px;top:41px;font-weight:bold;font-size:11.5px;color:#505050">Legend</div><svg class="a" style="left:310.5px;top:42.5px" width="11" height="11" viewBox="0 0 11 11"><circle cx="5.5" cy="5.5" r="4.5" fill="none" stroke="#505050" stroke-width="1.7"/><path d="M2.8 5.5 H7.2 M5.3 3.4 L7.4 5.5 L5.3 7.6" fill="none" stroke="#505050" stroke-width="1.5"/></svg><div class="dot" style="left:247px;top:61px;background:#57c17b"></div><div class="lg" style="left:262px;top:59px">France</div><div class="dot" style="left:247px;top:83px;background:#006e8a"></div><div class="lg" style="left:262px;top:81px">Guadeloupe</div><div class="dot" style="left:247px;top:105px;background:#6f87d8"></div><div class="lg" style="left:262px;top:103px">Monaco</div><div class="dot" style="left:247px;top:127px;background:#663db8"></div><div class="lg" style="left:262px;top:125px">België</div><div class="dot" style="left:247px;top:149px;background:#bc52bc"></div><div class="lg" style="left:262px;top:147px">United States</div><div class="fline" style="top:186px"></div><div class="ctab" style="left:146.0px;top:186px"><svg width="14" height="9" viewBox="0 0 14 9"><path d="M2.6 7 L7 2.6 L11.4 7" fill="none" stroke="#2b2b2b" stroke-width="2.5" stroke-linecap="round" stroke-linejoin="miter"/></svg></div></div>
<div class="panel" style="left:1419px;top:428px;width:695px;height:210px"><div class="ph"><span class="pt">ucie-metric-global</span><span class="pic" style="right:39px;top:12.7px"><svg width="12" height="12" viewBox="0 0 12 12"><path d="M0.9 11.1 L1.9 7.3 L7.6 1.6 L10.4 4.4 L4.7 10.1 Z" fill="#2a2a2a"/><path d="M8.3 0.9 Q9.1 0.2 9.8 0.9 L11.1 2.2 Q11.8 2.9 11.1 3.7 L10.4 4.4 L7.6 1.6 Z" fill="#2a2a2a"/><path d="M7.2 2.2 L9.8 4.8" stroke="#f3f4f4" stroke-width="0.8"/><circle cx="2.6" cy="9.3" r="0.9" fill="#f3f4f4"/></svg></span><span class="pic" style="right:17.5px;top:13.6px"><svg width="10" height="10" viewBox="0 0 10 10"><path d="M2 2 L8 8 M8 2 L2 8" stroke="#222" stroke-width="2.2" stroke-linecap="round"/></svg></span></div><div class="a" style="left:0;top:61px;width:693px;text-align:center;font-size:82px;font-weight:bold;color:#3a3a3a;line-height:90px">82572</div><div class="a" style="left:0;top:162px;width:693px;text-align:center;font-size:13px;color:#333">Count</div><div class="fline" style="top:186px"></div><div class="ctab" style="left:323.0px;top:186px"><svg width="14" height="9" viewBox="0 0 14 9"><path d="M2.6 7 L7 2.6 L11.4 7" fill="none" stroke="#2b2b2b" stroke-width="2.5" stroke-linecap="round" stroke-linejoin="miter"/></svg></div></div>
<div class="panel" style="left:10px;top:648px;width:1047px;height:320px"><div class="ph"><span class="pt">ucie-date-histo-global</span><span class="pic" style="right:39px;top:12.7px"><svg width="12" height="12" viewBox="0 0 12 12"><path d="M0.9 11.1 L1.9 7.3 L7.6 1.6 L10.4 4.4 L4.7 10.1 Z" fill="#2a2a2a"/><path d="M8.3 0.9 Q9.1 0.2 9.8 0.9 L11.1 2.2 Q11.8 2.9 11.1 3.7 L10.4 4.4 L7.6 1.6 Z" fill="#2a2a2a"/><path d="M7.2 2.2 L9.8 4.8" stroke="#f3f4f4" stroke-width="0.8"/><circle cx="2.6" cy="9.3" r="0.9" fill="#f3f4f4"/></svg></span><span class="pic" style="right:17.5px;top:13.6px"><svg width="10" height="10" viewBox="0 0 10 10"><path d="M2 2 L8 8 M8 2 L2 8" stroke="#222" stroke-width="2.2" stroke-linecap="round"/></svg></span></div><svg class="a" style="left:0;top:0" width="1045" height="298"><rect x="52.10" y="223.95" width="5.9" height="21.85" fill="#57c17b"/><rect x="60.32" y="237.45" width="5.9" height="8.35" fill="#57c17b"/><rect x="68.53" y="241.87" width="5.9" height="3.93" fill="#57c17b"/><rect x="76.74" y="245.06" width="5.9" height="0.74" fill="#57c17b"/><rect x="84.96" y="243.10" width="5.9" height="2.70" fill="#57c17b"/><rect x="93.17" y="243.59" width="5.9" height="2.21" fill="#57c17b"/><rect x="101.39" y="239.42" width="5.9" height="6.38" fill="#57c17b"/><rect x="109.60" y="211.43" width="5.9" height="34.37" fill="#57c17b"/><rect x="117.82" y="187.86" width="5.9" height="57.94" fill="#57c17b"/><rect x="126.03" y="185.41" width="5.9" height="60.39" fill="#57c17b"/><rect x="134.25" y="197.68" width="5.9" height="48.12" fill="#57c17b"/><rect x="142.47" y="190.81" width="5.9" height="54.99" fill="#57c17b"/><rect x="150.68" y="191.79" width="5.9" height="54.01" fill="#57c17b"/><rect x="158.90" y="192.77" width="5.9" height="53.03" fill="#57c17b"/><rect x="167.11" y="203.08" width="5.9" height="42.72" fill="#57c17b"/><rect x="175.32" y="206.52" width="5.9" height="39.28" fill="#57c17b"/><rect x="183.54" y="205.05" width="5.9" height="40.75" fill="#57c17b"/><rect x="191.75" y="190.81" width="5.9" height="54.99" fill="#57c17b"/><rect x="199.97" y="177.06" width="5.9" height="68.74" fill="#57c17b"/><rect x="208.19" y="144.16" width="5.9" height="101.64" fill="#57c17b"/><rect x="216.40" y="147.60" width="5.9" height="98.20" fill="#57c17b"/><rect x="224.61" y="157.42" width="5.9" height="88.38" fill="#57c17b"/><rect x="232.83" y="169.20" width="5.9" height="76.60" fill="#57c17b"/><rect x="241.04" y="180.01" width="5.9" height="65.79" fill="#57c17b"/><rect x="249.26" y="220.76" width="5.9" height="25.04" fill="#57c17b"/><rect x="257.48" y="236.96" width="5.9" height="8.84" fill="#57c17b"/><rect x="265.69" y="243.59" width="5.9" height="2.21" fill="#57c17b"/><rect x="273.91" y="244.33" width="5.9" height="1.47" fill="#57c17b"/><rect x="282.12" y="243.59" width="5.9" height="2.21" fill="#57c17b"/><rect x="290.34" y="242.61" width="5.9" height="3.19" fill="#57c17b"/><rect x="298.55" y="235.00" width="5.9" height="10.80" fill="#57c17b"/><rect x="306.76" y="201.61" width="5.9" height="44.19" fill="#57c17b"/><rect x="314.98" y="195.23" width="5.9" height="50.57" fill="#57c17b"/><rect x="323.19" y="185.90" width="5.9" height="59.90" fill="#57c17b"/><rect x="331.41" y="181.48" width="5.9" height="64.32" fill="#57c17b"/><rect x="339.62" y="184.92" width="5.9" height="60.88" fill="#57c17b"/><rect x="347.84" y="176.08" width="5.9" height="69.72" fill="#57c17b"/><rect x="356.06" y="183.20" width="5.9" height="62.60" fill="#57c17b"/><rect x="364.27" y="199.15" width="5.9" height="46.65" fill="#57c17b"/><rect x="372.49" y="183.44" width="5.9" height="62.36" fill="#57c17b"/><rect x="380.70" y="173.13" width="5.9" height="72.67" fill="#57c17b"/><rect x="388.92" y="173.62" width="5.9" height="72.18" fill="#57c17b"/><rect x="397.13" y="174.11" width="5.9" height="71.69" fill="#57c17b"/><rect x="405.35" y="158.40" width="5.9" height="87.40" fill="#57c17b"/><rect x="413.56" y="98.99" width="5.9" height="146.81" fill="#57c17b"/><rect x="421.78" y="101.45" width="5.9" height="144.35" fill="#57c17b"/><rect x="429.99" y="119.61" width="5.9" height="126.19" fill="#57c17b"/><rect x="438.21" y="77.88" width="5.9" height="167.92" fill="#57c17b"/><rect x="446.42" y="176.08" width="5.9" height="69.72" fill="#57c17b"/><rect x="454.63" y="223.70" width="5.9" height="22.09" fill="#57c17b"/><rect x="462.85" y="229.11" width="5.9" height="16.69" fill="#57c17b"/><rect x="471.06" y="234.02" width="5.9" height="11.78" fill="#57c17b"/><rect x="479.28" y="239.91" width="5.9" height="5.89" fill="#57c17b"/><rect x="487.50" y="236.96" width="5.9" height="8.84" fill="#57c17b"/><rect x="495.71" y="222.72" width="5.9" height="23.08" fill="#57c17b"/><rect x="503.93" y="199.65" width="5.9" height="46.15" fill="#57c17b"/><rect x="512.14" y="162.33" width="5.9" height="83.47" fill="#57c17b"/><rect x="520.36" y="175.10" width="5.9" height="70.70" fill="#57c17b"/><rect x="528.57" y="177.06" width="5.9" height="68.74" fill="#57c17b"/><rect x="536.78" y="181.48" width="5.9" height="64.32" fill="#57c17b"/><rect x="545.00" y="177.06" width="5.9" height="68.74" fill="#57c17b"/><rect x="553.22" y="190.81" width="5.9" height="54.99" fill="#57c17b"/><rect x="561.43" y="189.83" width="5.9" height="55.97" fill="#57c17b"/><rect x="569.64" y="199.65" width="5.9" height="46.15" fill="#57c17b"/><rect x="577.86" y="180.01" width="5.9" height="65.79" fill="#57c17b"/><rect x="586.08" y="180.01" width="5.9" height="65.79" fill="#57c17b"/><rect x="594.29" y="175.10" width="5.9" height="70.70" fill="#57c17b"/><rect x="602.50" y="145.64" width="5.9" height="100.16" fill="#57c17b"/><rect x="610.72" y="83.28" width="5.9" height="162.52" fill="#57c17b"/><rect x="618.94" y="80.82" width="5.9" height="164.98" fill="#57c17b"/><rect x="627.15" y="126.98" width="5.9" height="118.82" fill="#57c17b"/><rect x="635.37" y="179.02" width="5.9" height="66.78" fill="#57c17b"/><rect x="643.58" y="214.87" width="5.9" height="30.93" fill="#57c17b"/><rect x="651.79" y="234.02" width="5.9" height="11.78" fill="#57c17b"/><rect x="660.01" y="239.91" width="5.9" height="5.89" fill="#57c17b"/><rect x="668.23" y="242.36" width="5.9" height="3.44" fill="#57c17b"/><rect x="676.44" y="244.33" width="5.9" height="1.47" fill="#57c17b"/><rect x="684.65" y="240.89" width="5.9" height="4.91" fill="#57c17b"/><rect x="692.87" y="227.14" width="5.9" height="18.66" fill="#57c17b"/><rect x="701.09" y="197.68" width="5.9" height="48.12" fill="#57c17b"/><rect x="709.30" y="157.91" width="5.9" height="87.89" fill="#57c17b"/><rect x="717.51" y="136.31" width="5.9" height="109.49" fill="#57c17b"/><rect x="725.73" y="150.55" width="5.9" height="95.25" fill="#57c17b"/><rect x="733.95" y="153.00" width="5.9" height="92.80" fill="#57c17b"/><rect x="742.16" y="148.58" width="5.9" height="97.22" fill="#57c17b"/><rect x="750.38" y="152.51" width="5.9" height="93.29" fill="#57c17b"/><rect x="758.59" y="163.31" width="5.9" height="82.49" fill="#57c17b"/><rect x="766.81" y="175.10" width="5.9" height="70.70" fill="#57c17b"/><rect x="775.02" y="162.33" width="5.9" height="83.47" fill="#57c17b"/><rect x="783.24" y="143.18" width="5.9" height="102.62" fill="#57c17b"/><rect x="791.45" y="109.30" width="5.9" height="136.50" fill="#57c17b"/><rect x="799.66" y="124.52" width="5.9" height="121.28" fill="#57c17b"/><rect x="807.88" y="107.83" width="5.9" height="137.97" fill="#57c17b"/><rect x="816.10" y="115.19" width="5.9" height="130.61" fill="#57c17b"/><rect x="824.31" y="120.59" width="5.9" height="125.20" fill="#57c17b"/><rect x="832.52" y="90.64" width="5.9" height="155.16" fill="#57c17b"/><rect x="840.74" y="205.54" width="5.9" height="40.26" fill="#57c17b"/><rect x="848.96" y="231.56" width="5.9" height="14.24" fill="#57c17b"/><rect x="857.17" y="239.91" width="5.9" height="5.89" fill="#57c17b"/><rect x="865.38" y="241.38" width="5.9" height="4.42" fill="#57c17b"/><rect x="873.60" y="240.40" width="5.9" height="5.40" fill="#57c17b"/><rect x="881.82" y="239.42" width="5.9" height="6.38" fill="#57c17b"/><rect x="890.03" y="234.51" width="5.9" height="11.29" fill="#57c17b"/><rect x="898.25" y="229.11" width="5.9" height="16.69" fill="#57c17b"/><rect x="906.46" y="214.87" width="5.9" height="30.93" fill="#57c17b"/><rect x="914.67" y="192.77" width="5.9" height="53.03" fill="#57c17b"/><rect x="922.89" y="198.17" width="5.9" height="47.63" fill="#57c17b"/><rect x="931.11" y="202.59" width="5.9" height="43.21" fill="#57c17b"/><rect x="939.32" y="200.14" width="5.9" height="45.66" fill="#57c17b"/><rect x="947.53" y="200.14" width="5.9" height="45.66" fill="#57c17b"/><rect x="955.75" y="206.03" width="5.9" height="39.77" fill="#57c17b"/><rect x="963.97" y="215.36" width="5.9" height="30.44" fill="#57c17b"/><rect x="972.18" y="218.30" width="5.9" height="27.50" fill="#57c17b"/><rect x="980.39" y="203.57" width="5.9" height="42.23" fill="#57c17b"/><rect x="988.61" y="192.28" width="5.9" height="53.52" fill="#57c17b"/><rect x="996.83" y="194.24" width="5.9" height="51.55" fill="#57c17b"/><rect x="1005.04" y="193.26" width="5.9" height="52.54" fill="#57c17b"/><rect x="1013.25" y="204.06" width="5.9" height="41.73" fill="#57c17b"/><rect x="1021.47" y="191.30" width="5.9" height="54.50" fill="#57c17b"/><rect x="1029.68" y="199.65" width="5.9" height="46.15" fill="#57c17b"/><line x1="50.8" y1="48" x2="50.8" y2="245.8" stroke="#e2e4e5" stroke-width="1"/><line x1="50.8" y1="246.3" x2="1037" y2="246.3" stroke="#e2e4e5" stroke-width="1"/><line x1="45.8" y1="245.8" x2="50.8" y2="245.8" stroke="#cfd3d5"/><text class="ax" x="41.8" y="249.8" text-anchor="end">0</text><line x1="45.8" y1="196.7" x2="50.8" y2="196.7" stroke="#cfd3d5"/><text class="ax" x="41.8" y="200.7" text-anchor="end">10</text><line x1="45.8" y1="147.6" x2="50.8" y2="147.6" stroke="#cfd3d5"/><text class="ax" x="41.8" y="151.6" text-anchor="end">20</text><line x1="45.8" y1="98.5" x2="50.8" y2="98.5" stroke="#cfd3d5"/><text class="ax" x="41.8" y="102.5" text-anchor="end">30</text><line x1="45.8" y1="49.4" x2="50.8" y2="49.4" stroke="#cfd3d5"/><text class="ax" x="41.8" y="53.4" text-anchor="end">40</text><line x1="157.8" y1="245.8" x2="157.8" y2="251.8" stroke="#cfd3d5"/><text class="ax" x="157.8" y="263.8" text-anchor="middle">2015-12-01 13:00</text><line x1="256.4" y1="245.8" x2="256.4" y2="251.8" stroke="#cfd3d5"/><text class="ax" x="256.4" y="263.8" text-anchor="middle">2015-12-02 01:00</text><line x1="355.0" y1="245.8" x2="355.0" y2="251.8" stroke="#cfd3d5"/><text class="ax" x="355.0" y="263.8" text-anchor="middle">2015-12-02 13:00</text><line x1="453.5" y1="245.8" x2="453.5" y2="251.8" stroke="#cfd3d5"/><text class="ax" x="453.5" y="263.8" text-anchor="middle">2015-12-03 01:00</text><line x1="552.1" y1="245.8" x2="552.1" y2="251.8" stroke="#cfd3d5"/><text class="ax" x="552.1" y="263.8" text-anchor="middle">2015-12-03 13:00</text><line x1="650.7" y1="245.8" x2="650.7" y2="251.8" stroke="#cfd3d5"/><text class="ax" x="650.7" y="263.8" text-anchor="middle">2015-12-04 01:00</text><line x1="749.3" y1="245.8" x2="749.3" y2="251.8" stroke="#cfd3d5"/><text class="ax" x="749.3" y="263.8" text-anchor="middle">2015-12-04 13:00</text><line x1="847.9" y1="245.8" x2="847.9" y2="251.8" stroke="#cfd3d5"/><text class="ax" x="847.9" y="263.8" text-anchor="middle">2015-12-05 01:00</text><line x1="946.4" y1="245.8" x2="946.4" y2="251.8" stroke="#cfd3d5"/><text class="ax" x="946.4" y="263.8" text-anchor="middle">2015-12-05 13:00</text><text x="544" y="282" text-anchor="middle" font-family="Liberation Sans" font-size="12" font-weight="bold" fill="#7f868b">@timestamp per minute</text><text transform="translate(12,145) rotate(-90)" text-anchor="middle" font-family="Liberation Sans" font-size="12" font-weight="bold" fill="#7f868b">Count</text></svg><div class="fline" style="top:296px"></div><div class="ctab" style="left:499.0px;top:296px"><svg width="14" height="9" viewBox="0 0 14 9"><path d="M2.6 7 L7 2.6 L11.4 7" fill="none" stroke="#2b2b2b" stroke-width="2.5" stroke-linecap="round" stroke-linejoin="miter"/></svg></div></div>
<div class="panel" style="left:1067px;top:648px;width:1047px;height:320px"><div class="ph"><span class="pt">ucie_percentile_followers_count</span><span class="pic" style="right:39px;top:12.7px"><svg width="12" height="12" viewBox="0 0 12 12"><path d="M0.9 11.1 L1.9 7.3 L7.6 1.6 L10.4 4.4 L4.7 10.1 Z" fill="#2a2a2a"/><path d="M8.3 0.9 Q9.1 0.2 9.8 0.9 L11.1 2.2 Q11.8 2.9 11.1 3.7 L10.4 4.4 L7.6 1.6 Z" fill="#2a2a2a"/><path d="M7.2 2.2 L9.8 4.8" stroke="#f3f4f4" stroke-width="0.8"/><circle cx="2.6" cy="9.3" r="0.9" fill="#f3f4f4"/></svg></span><span class="pic" style="right:17.5px;top:13.6px"><svg width="10" height="10" viewBox="0 0 10 10"><path d="M2 2 L8 8 M8 2 L2 8" stroke="#222" stroke-width="2.2" stroke-linecap="round"/></svg></span></div><svg class="a" style="left:0;top:0" width="1045" height="298"><line x1="50.4" y1="48" x2="50.4" y2="245.7" stroke="#e2e4e5" stroke-width="1"/><line x1="50.4" y1="246.2" x2="1040" y2="246.2" stroke="#e2e4e5" stroke-width="1"/><line x1="45.4" y1="245.7" x2="50.4" y2="245.7" stroke="#cfd3d5"/><text class="ax" x="41.4" y="249.7" text-anchor="end">0</text><line x1="45.4" y1="213.0" x2="50.4" y2="213.0" stroke="#cfd3d5"/><text class="ax" x="41.4" y="217.0" text-anchor="end">500</text><line x1="45.4" y1="180.2" x2="50.4" y2="180.2" stroke="#cfd3d5"/><text class="ax" x="41.4" y="184.2" text-anchor="end">1k</text><line x1="45.4" y1="147.5" x2="50.4" y2="147.5" stroke="#cfd3d5"/><text class="ax" x="41.4" y="151.5" text-anchor="end">1.5k</text><line x1="45.4" y1="114.8" x2="50.4" y2="114.8" stroke="#cfd3d5"/><text class="ax" x="41.4" y="118.8" text-anchor="end">2k</text><line x1="45.4" y1="82.1" x2="50.4" y2="82.1" stroke="#cfd3d5"/><text class="ax" x="41.4" y="86.1" text-anchor="end">2.5k</text><line x1="45.4" y1="49.3" x2="50.4" y2="49.3" stroke="#cfd3d5"/><text class="ax" x="41.4" y="53.3" text-anchor="end">3k</text><line x1="158.4" y1="245.7" x2="158.4" y2="251.7" stroke="#cfd3d5"/><text class="ax" x="158.4" y="263.7" text-anchor="middle">2015-12-01 13:00</text><line x1="257.0" y1="245.7" x2="257.0" y2="251.7" stroke="#cfd3d5"/><text class="ax" x="257.0" y="263.7" text-anchor="middle">2015-12-02 01:00</text><line x1="355.6" y1="245.7" x2="355.6" y2="251.7" stroke="#cfd3d5"/><text class="ax" x="355.6" y="263.7" text-anchor="middle">2015-12-02 13:00</text><line x1="454.1" y1="245.7" x2="454.1" y2="251.7" stroke="#cfd3d5"/><text class="ax" x="454.1" y="263.7" text-anchor="middle">2015-12-03 01:00</text><line x1="552.7" y1="245.7" x2="552.7" y2="251.7" stroke="#cfd3d5"/><text class="ax" x="552.7" y="263.7" text-anchor="middle">2015-12-03 13:00</text><line x1="651.3" y1="245.7" x2="651.3" y2="251.7" stroke="#cfd3d5"/><text class="ax" x="651.3" y="263.7" text-anchor="middle">2015-12-04 01:00</text><line x1="749.9" y1="245.7" x2="749.9" y2="251.7" stroke="#cfd3d5"/><text class="ax" x="749.9" y="263.7" text-anchor="middle">2015-12-04 13:00</text><line x1="848.5" y1="245.7" x2="848.5" y2="251.7" stroke="#cfd3d5"/><text class="ax" x="848.5" y="263.7" text-anchor="middle">2015-12-05 01:00</text><line x1="947.0" y1="245.7" x2="947.0" y2="251.7" stroke="#cfd3d5"/><text class="ax" x="947.0" y="263.7" text-anchor="middle">2015-12-05 13:00</text><defs><clipPath id="pc"><rect x="50.4" y="0" width="1000" height="249.7"/></clipPath></defs><g clip-path="url(#pc)"><path d="M55.7 234.6 L63.9 240.7 L72.1 238.5 L80.4 240.1 L88.6 232.0 L96.8 239.2 L105.0 237.8 L113.2 233.9 L121.4 234.9 L129.6 235.6 L137.9 234.9 L146.1 237.4 L154.3 238.5 L162.5 237.2 L170.7 236.3 L178.9 237.8 L187.1 232.6 L195.4 235.6 L203.6 235.6 L211.8 235.6 L220.0 236.7 L228.2 236.3 L236.4 238.5 L244.7 238.5 L252.9 237.8 L261.1 235.6 L269.3 242.8 L277.5 234.9 L285.7 189.4 L293.9 239.4 L302.2 234.6 L310.4 235.6 L318.6 239.4 L326.8 235.6 L335.0 234.6 L343.2 236.3 L351.4 235.6 L359.7 239.2 L367.9 235.6 L376.1 233.9 L384.3 234.9 L392.5 239.4 L400.7 238.5 L409.0 239.2 L417.2 237.4 L425.4 236.7 L433.6 236.3 L441.8 237.2 L450.0 236.7 L458.2 230.6 L466.5 234.9 L474.7 234.6 L482.9 234.9 L491.1 234.9 L499.3 236.7 L507.5 234.9 L515.7 239.2 L524.0 237.8 L532.2 239.2 L540.4 238.5 L548.6 235.2 L556.8 236.7 L565.0 233.3 L573.3 236.7 L581.5 233.9 L589.7 234.6 L597.9 236.7 L606.1 237.4 L614.3 232.9 L622.5 234.6 L630.8 237.4 L639.0 237.4 L647.2 238.3 L655.4 237.4 L663.6 238.3 L671.8 232.9 L680.0 237.2 L688.3 234.9 L696.5 234.9 L704.7 236.7 L712.9 235.6 L721.1 236.7 L729.3 237.4 L737.6 236.3 L745.8 234.9 L754.0 235.6 L762.2 238.3 L770.4 236.3 L778.6 237.8 L786.8 237.8 L795.1 237.4 L803.3 237.8 L811.5 242.4 L819.7 240.5 L827.9 240.5 L836.1 239.2 L844.3 240.5 L852.6 237.2 L860.8 238.5 L869.0 238.5 L877.2 240.1 L885.4 236.0 L893.6 240.1 L901.9 237.4 L910.1 234.9 L918.3 238.5 L926.5 239.2 L934.7 236.7 L942.9 235.6 L951.1 237.8 L959.4 239.2 L967.6 238.3 L975.8 238.3 L984.0 236.3 L992.2 237.2 L1000.4 237.4 L1008.6 237.8 L1016.9 239.2 L1025.1 236.7 L1033.3 233.9" fill="none" stroke="#57c17b" stroke-width="2"/><circle cx="55.7" cy="234.6" r="3.2" fill="#57c17b"/><circle cx="63.9" cy="240.7" r="3.2" fill="#57c17b"/><circle cx="72.1" cy="238.5" r="3.2" fill="#57c17b"/><circle cx="80.4" cy="240.1" r="3.2" fill="#57c17b"/><circle cx="88.6" cy="232.0" r="3.2" fill="#57c17b"/><circle cx="96.8" cy="239.2" r="3.2" fill="#57c17b"/><circle cx="105.0" cy="237.8" r="3.2" fill="#57c17b"/><circle cx="113.2" cy="233.9" r="3.2" fill="#57c17b"/><circle cx="121.4" cy="234.9" r="3.2" fill="#57c17b"/><circle cx="129.6" cy="235.6" r="3.2" fill="#57c17b"/><circle cx="137.9" cy="234.9" r="3.2" fill="#57c17b"/><circle cx="146.1" cy="237.4" r="3.2" fill="#57c17b"/><circle cx="154.3" cy="238.5" r="3.2" fill="#57c17b"/><circle cx="162.5" cy="237.2" r="3.2" fill="#57c17b"/><circle cx="170.7" cy="236.3" r="3.2" fill="#57c17b"/><circle cx="178.9" cy="237.8" r="3.2" fill="#57c17b"/><circle cx="187.1" cy="232.6" r="3.2" fill="#57c17b"/><circle cx="195.4" cy="235.6" r="3.2" fill="#57c17b"/><circle cx="203.6" cy="235.6" r="3.2" fill="#57c17b"/><circle cx="211.8" cy="235.6" r="3.2" fill="#57c17b"/><circle cx="220.0" cy="236.7" r="3.2" fill="#57c17b"/><circle cx="228.2" cy="236.3" r="3.2" fill="#57c17b"/><circle cx="236.4" cy="238.5" r="3.2" fill="#57c17b"/><circle cx="244.7" cy="238.5" r="3.2" fill="#57c17b"/><circle cx="252.9" cy="237.8" r="3.2" fill="#57c17b"/><circle cx="261.1" cy="235.6" r="3.2" fill="#57c17b"/><circle cx="269.3" cy="242.8" r="3.2" fill="#57c17b"/><circle cx="277.5" cy="234.9" r="3.2" fill="#57c17b"/><circle cx="285.7" cy="189.4" r="3.2" fill="#57c17b"/><circle cx="293.9" cy="239.4" r="3.2" fill="#57c17b"/><circle cx="302.2" cy="234.6" r="3.2" fill="#57c17b"/><circle cx="310.4" cy="235.6" r="3.2" fill="#57c17b"/><circle cx="318.6" cy="239.4" r="3.2" fill="#57c17b"/><circle cx="326.8" cy="235.6" r="3.2" fill="#57c17b"/><circle cx="335.0" cy="234.6" r="3.2" fill="#57c17b"/><circle cx="343.2" cy="236.3" r="3.2" fill="#57c17b"/><circle cx="351.4" cy="235.6" r="3.2" fill="#57c17b"/><circle cx="359.7" cy="239.2" r="3.2" fill="#57c17b"/><circle cx="367.9" cy="235.6" r="3.2" fill="#57c17b"/><circle cx="376.1" cy="233.9" r="3.2" fill="#57c17b"/><circle cx="384.3" cy="234.9" r="3.2" fill="#57c17b"/><circle cx="392.5" cy="239.4" r="3.2" fill="#57c17b"/><circle cx="400.7" cy="238.5" r="3.2" fill="#57c17b"/><circle cx="409.0" cy="239.2" r="3.2" fill="#57c17b"/><circle cx="417.2" cy="237.4" r="3.2" fill="#57c17b"/><circle cx="425.4" cy="236.7" r="3.2" fill="#57c17b"/><circle cx="433.6" cy="236.3" r="3.2" fill="#57c17b"/><circle cx="441.8" cy="237.2" r="3.2" fill="#57c17b"/><circle cx="450.0" cy="236.7" r="3.2" fill="#57c17b"/><circle cx="458.2" cy="230.6" r="3.2" fill="#57c17b"/><circle cx="466.5" cy="234.9" r="3.2" fill="#57c17b"/><circle cx="474.7" cy="234.6" r="3.2" fill="#57c17b"/><circle cx="482.9" cy="234.9" r="3.2" fill="#57c17b"/><circle cx="491.1" cy="234.9" r="3.2" fill="#57c17b"/><circle cx="499.3" cy="236.7" r="3.2" fill="#57c17b"/><circle cx="507.5" cy="234.9" r="3.2" fill="#57c17b"/><circle cx="515.7" cy="239.2" r="3.2" fill="#57c17b"/><circle cx="524.0" cy="237.8" r="3.2" fill="#57c17b"/><circle cx="532.2" cy="239.2" r="3.2" fill="#57c17b"/><circle cx="540.4" cy="238.5" r="3.2" fill="#57c17b"/><circle cx="548.6" cy="235.2" r="3.2" fill="#57c17b"/><circle cx="556.8" cy="236.7" r="3.2" fill="#57c17b"/><circle cx="565.0" cy="233.3" r="3.2" fill="#57c17b"/><circle cx="573.3" cy="236.7" r="3.2" fill="#57c17b"/><circle cx="581.5" cy="233.9" r="3.2" fill="#57c17b"/><circle cx="589.7" cy="234.6" r="3.2" fill="#57c17b"/><circle cx="597.9" cy="236.7" r="3.2" fill="#57c17b"/><circle cx="606.1" cy="237.4" r="3.2" fill="#57c17b"/><circle cx="614.3" cy="232.9" r="3.2" fill="#57c17b"/><circle cx="622.5" cy="234.6" r="3.2" fill="#57c17b"/><circle cx="630.8" cy="237.4" r="3.2" fill="#57c17b"/><circle cx="639.0" cy="237.4" r="3.2" fill="#57c17b"/><circle cx="647.2" cy="238.3" r="3.2" fill="#57c17b"/><circle cx="655.4" cy="237.4" r="3.2" fill="#57c17b"/><circle cx="663.6" cy="238.3" r="3.2" fill="#57c17b"/><circle cx="671.8" cy="232.9" r="3.2" fill="#57c17b"/><circle cx="680.0" cy="237.2" r="3.2" fill="#57c17b"/><circle cx="688.3" cy="234.9" r="3.2" fill="#57c17b"/><circle cx="696.5" cy="234.9" r="3.2" fill="#57c17b"/><circle cx="704.7" cy="236.7" r="3.2" fill="#57c17b"/><circle cx="712.9" cy="235.6" r="3.2" fill="#57c17b"/><circle cx="721.1" cy="236.7" r="3.2" fill="#57c17b"/><circle cx="729.3" cy="237.4" r="3.2" fill="#57c17b"/><circle cx="737.6" cy="236.3" r="3.2" fill="#57c17b"/><circle cx="745.8" cy="234.9" r="3.2" fill="#57c17b"/><circle cx="754.0" cy="235.6" r="3.2" fill="#57c17b"/><circle cx="762.2" cy="238.3" r="3.2" fill="#57c17b"/><circle cx="770.4" cy="236.3" r="3.2" fill="#57c17b"/><circle cx="778.6" cy="237.8" r="3.2" fill="#57c17b"/><circle cx="786.8" cy="237.8" r="3.2" fill="#57c17b"/><circle cx="795.1" cy="237.4" r="3.2" fill="#57c17b"/><circle cx="803.3" cy="237.8" r="3.2" fill="#57c17b"/><circle cx="811.5" cy="242.4" r="3.2" fill="#57c17b"/><circle cx="819.7" cy="240.5" r="3.2" fill="#57c17b"/><circle cx="827.9" cy="240.5" r="3.2" fill="#57c17b"/><circle cx="836.1" cy="239.2" r="3.2" fill="#57c17b"/><circle cx="844.3" cy="240.5" r="3.2" fill="#57c17b"/><circle cx="852.6" cy="237.2" r="3.2" fill="#57c17b"/><circle cx="860.8" cy="238.5" r="3.2" fill="#57c17b"/><circle cx="869.0" cy="238.5" r="3.2" fill="#57c17b"/><circle cx="877.2" cy="240.1" r="3.2" fill="#57c17b"/><circle cx="885.4" cy="236.0" r="3.2" fill="#57c17b"/><circle cx="893.6" cy="240.1" r="3.2" fill="#57c17b"/><circle cx="901.9" cy="237.4" r="3.2" fill="#57c17b"/><circle cx="910.1" cy="234.9" r="3.2" fill="#57c17b"/><circle cx="918.3" cy="238.5" r="3.2" fill="#57c17b"/><circle cx="926.5" cy="239.2" r="3.2" fill="#57c17b"/><circle cx="934.7" cy="236.7" r="3.2" fill="#57c17b"/><circle cx="942.9" cy="235.6" r="3.2" fill="#57c17b"/><circle cx="951.1" cy="237.8" r="3.2" fill="#57c17b"/><circle cx="959.4" cy="239.2" r="3.2" fill="#57c17b"/><circle cx="967.6" cy="238.3" r="3.2" fill="#57c17b"/><circle cx="975.8" cy="238.3" r="3.2" fill="#57c17b"/><circle cx="984.0" cy="236.3" r="3.2" fill="#57c17b"/><circle cx="992.2" cy="237.2" r="3.2" fill="#57c17b"/><circle cx="1000.4" cy="237.4" r="3.2" fill="#57c17b"/><circle cx="1008.6" cy="237.8" r="3.2" fill="#57c17b"/><circle cx="1016.9" cy="239.2" r="3.2" fill="#57c17b"/><circle cx="1025.1" cy="236.7" r="3.2" fill="#57c17b"/><circle cx="1033.3" cy="233.9" r="3.2" fill="#57c17b"/><path d="M55.7 220.8 L63.9 213.0 L72.1 233.9 L80.4 213.6 L88.6 196.9 L96.8 216.9 L105.0 226.1 L113.2 211.0 L121.4 208.4 L129.6 211.0 L137.9 218.2 L146.1 218.9 L154.3 218.2 L162.5 220.8 L170.7 213.6 L178.9 220.2 L187.1 211.0 L195.4 213.6 L203.6 217.5 L211.8 220.8 L220.0 225.4 L228.2 221.5 L236.4 225.4 L244.7 226.7 L252.9 222.8 L261.1 218.2 L269.3 224.1 L277.5 192.0 L285.7 149.5 L293.9 214.9 L302.2 199.9 L310.4 211.7 L318.6 220.2 L326.8 219.5 L335.0 216.2 L343.2 222.1 L351.4 219.8 L359.7 223.4 L367.9 218.2 L376.1 214.9 L384.3 216.2 L392.5 226.1 L400.7 221.5 L409.0 221.5 L417.2 221.5 L425.4 219.8 L433.6 218.9 L441.8 218.2 L450.0 218.9 L458.2 218.2 L466.5 226.7 L474.7 214.9 L482.9 196.9 L491.1 231.3 L499.3 222.1 L507.5 217.5 L515.7 223.4 L524.0 219.8 L532.2 222.1 L540.4 224.1 L548.6 220.5 L556.8 217.5 L565.0 211.0 L573.3 211.0 L581.5 211.0 L589.7 215.6 L597.9 217.5 L606.1 222.8 L614.3 211.7 L622.5 217.5 L630.8 220.8 L639.0 222.8 L647.2 225.4 L655.4 228.7 L663.6 233.9 L671.8 214.3 L680.0 220.5 L688.3 214.3 L696.5 221.5 L704.7 209.2 L712.9 208.6 L721.1 214.3 L729.3 218.2 L737.6 214.9 L745.8 216.2 L754.0 216.9 L762.2 220.2 L770.4 218.9 L778.6 218.9 L786.8 220.2 L795.1 218.9 L803.3 217.5 L811.5 230.4 L819.7 227.4 L827.9 227.0 L836.1 226.1 L844.3 225.4 L852.6 226.1 L860.8 226.1 L869.0 225.0 L877.2 234.9 L885.4 226.1 L893.6 230.4 L901.9 218.2 L910.1 210.3 L918.3 218.9 L926.5 223.6 L934.7 219.5 L942.9 220.2 L951.1 226.1 L959.4 227.4 L967.6 230.4 L975.8 222.5 L984.0 215.6 L992.2 217.5 L1000.4 219.5 L1008.6 220.2 L1016.9 227.7 L1025.1 218.2 L1033.3 218.9" fill="none" stroke="#006e8a" stroke-width="2"/><circle cx="55.7" cy="220.8" r="3.2" fill="#006e8a"/><circle cx="63.9" cy="213.0" r="3.2" fill="#006e8a"/><circle cx="72.1" cy="233.9" r="3.2" fill="#006e8a"/><circle cx="80.4" cy="213.6" r="3.2" fill="#006e8a"/><circle cx="88.6" cy="196.9" r="3.2" fill="#006e8a"/><circle cx="96.8" cy="216.9" r="3.2" fill="#006e8a"/><circle cx="105.0" cy="226.1" r="3.2" fill="#006e8a"/><circle cx="113.2" cy="211.0" r="3.2" fill="#006e8a"/><circle cx="121.4" cy="208.4" r="3.2" fill="#006e8a"/><circle cx="129.6" cy="211.0" r="3.2" fill="#006e8a"/><circle cx="137.9" cy="218.2" r="3.2" fill="#006e8a"/><circle cx="146.1" cy="218.9" r="3.2" fill="#006e8a"/><circle cx="154.3" cy="218.2" r="3.2" fill="#006e8a"/><circle cx="162.5" cy="220.8" r="3.2" fill="#006e8a"/><circle cx="170.7" cy="213.6" r="3.2" fill="#006e8a"/><circle cx="178.9" cy="220.2" r="3.2" fill="#006e8a"/><circle cx="187.1" cy="211.0" r="3.2" fill="#006e8a"/><circle cx="195.4" cy="213.6" r="3.2" fill="#006e8a"/><circle cx="203.6" cy="217.5" r="3.2" fill="#006e8a"/><circle cx="211.8" cy="220.8" r="3.2" fill="#006e8a"/><circle cx="220.0" cy="225.4" r="3.2" fill="#006e8a"/><circle cx="228.2" cy="221.5" r="3.2" fill="#006e8a"/><circle cx="236.4" cy="225.4" r="3.2" fill="#006e8a"/><circle cx="244.7" cy="226.7" r="3.2" fill="#006e8a"/><circle cx="252.9" cy="222.8" r="3.2" fill="#006e8a"/><circle cx="261.1" cy="218.2" r="3.2" fill="#006e8a"/><circle cx="269.3" cy="224.1" r="3.2" fill="#006e8a"/><circle cx="277.5" cy="192.0" r="3.2" fill="#006e8a"/><circle cx="285.7" cy="149.5" r="3.2" fill="#006e8a"/><circle cx="293.9" cy="214.9" r="3.2" fill="#006e8a"/><circle cx="302.2" cy="199.9" r="3.2" fill="#006e8a"/><circle cx="310.4" cy="211.7" r="3.2" fill="#006e8a"/><circle cx="318.6" cy="220.2" r="3.2" fill="#006e8a"/><circle cx="326.8" cy="219.5" r="3.2" fill="#006e8a"/><circle cx="335.0" cy="216.2" r="3.2" fill="#006e8a"/><circle cx="343.2" cy="222.1" r="3.2" fill="#006e8a"/><circle cx="351.4" cy="219.8" r="3.2" fill="#006e8a"/><circle cx="359.7" cy="223.4" r="3.2" fill="#006e8a"/><circle cx="367.9" cy="218.2" r="3.2" fill="#006e8a"/><circle cx="376.1" cy="214.9" r="3.2" fill="#006e8a"/><circle cx="384.3" cy="216.2" r="3.2" fill="#006e8a"/><circle cx="392.5" cy="226.1" r="3.2" fill="#006e8a"/><circle cx="400.7" cy="221.5" r="3.2" fill="#006e8a"/><circle cx="409.0" cy="221.5" r="3.2" fill="#006e8a"/><circle cx="417.2" cy="221.5" r="3.2" fill="#006e8a"/><circle cx="425.4" cy="219.8" r="3.2" fill="#006e8a"/><circle cx="433.6" cy="218.9" r="3.2" fill="#006e8a"/><circle cx="441.8" cy="218.2" r="3.2" fill="#006e8a"/><circle cx="450.0" cy="218.9" r="3.2" fill="#006e8a"/><circle cx="458.2" cy="218.2" r="3.2" fill="#006e8a"/><circle cx="466.5" cy="226.7" r="3.2" fill="#006e8a"/><circle cx="474.7" cy="214.9" r="3.2" fill="#006e8a"/><circle cx="482.9" cy="196.9" r="3.2" fill="#006e8a"/><circle cx="491.1" cy="231.3" r="3.2" fill="#006e8a"/><circle cx="499.3" cy="222.1" r="3.2" fill="#006e8a"/><circle cx="507.5" cy="217.5" r="3.2" fill="#006e8a"/><circle cx="515.7" cy="223.4" r="3.2" fill="#006e8a"/><circle cx="524.0" cy="219.8" r="3.2" fill="#006e8a"/><circle cx="532.2" cy="222.1" r="3.2" fill="#006e8a"/><circle cx="540.4" cy="224.1" r="3.2" fill="#006e8a"/><circle cx="548.6" cy="220.5" r="3.2" fill="#006e8a"/><circle cx="556.8" cy="217.5" r="3.2" fill="#006e8a"/><circle cx="565.0" cy="211.0" r="3.2" fill="#006e8a"/><circle cx="573.3" cy="211.0" r="3.2" fill="#006e8a"/><circle cx="581.5" cy="211.0" r="3.2" fill="#006e8a"/><circle cx="589.7" cy="215.6" r="3.2" fill="#006e8a"/><circle cx="597.9" cy="217.5" r="3.2" fill="#006e8a"/><circle cx="606.1" cy="222.8" r="3.2" fill="#006e8a"/><circle cx="614.3" cy="211.7" r="3.2" fill="#006e8a"/><circle cx="622.5" cy="217.5" r="3.2" fill="#006e8a"/><circle cx="630.8" cy="220.8" r="3.2" fill="#006e8a"/><circle cx="639.0" cy="222.8" r="3.2" fill="#006e8a"/><circle cx="647.2" cy="225.4" r="3.2" fill="#006e8a"/><circle cx="655.4" cy="228.7" r="3.2" fill="#006e8a"/><circle cx="663.6" cy="233.9" r="3.2" fill="#006e8a"/><circle cx="671.8" cy="214.3" r="3.2" fill="#006e8a"/><circle cx="680.0" cy="220.5" r="3.2" fill="#006e8a"/><circle cx="688.3" cy="214.3" r="3.2" fill="#006e8a"/><circle cx="696.5" cy="221.5" r="3.2" fill="#006e8a"/><circle cx="704.7" cy="209.2" r="3.2" fill="#006e8a"/><circle cx="712.9" cy="208.6" r="3.2" fill="#006e8a"/><circle cx="721.1" cy="214.3" r="3.2" fill="#006e8a"/><circle cx="729.3" cy="218.2" r="3.2" fill="#006e8a"/><circle cx="737.6" cy="214.9" r="3.2" fill="#006e8a"/><circle cx="745.8" cy="216.2" r="3.2" fill="#006e8a"/><circle cx="754.0" cy="216.9" r="3.2" fill="#006e8a"/><circle cx="762.2" cy="220.2" r="3.2" fill="#006e8a"/><circle cx="770.4" cy="218.9" r="3.2" fill="#006e8a"/><circle cx="778.6" cy="218.9" r="3.2" fill="#006e8a"/><circle cx="786.8" cy="220.2" r="3.2" fill="#006e8a"/><circle cx="795.1" cy="218.9" r="3.2" fill="#006e8a"/><circle cx="803.3" cy="217.5" r="3.2" fill="#006e8a"/><circle cx="811.5" cy="230.4" r="3.2" fill="#006e8a"/><circle cx="819.7" cy="227.4" r="3.2" fill="#006e8a"/><circle cx="827.9" cy="227.0" r="3.2" fill="#006e8a"/><circle cx="836.1" cy="226.1" r="3.2" fill="#006e8a"/><circle cx="844.3" cy="225.4" r="3.2" fill="#006e8a"/><circle cx="852.6" cy="226.1" r="3.2" fill="#006e8a"/><circle cx="860.8" cy="226.1" r="3.2" fill="#006e8a"/><circle cx="869.0" cy="225.0" r="3.2" fill="#006e8a"/><circle cx="877.2" cy="234.9" r="3.2" fill="#006e8a"/><circle cx="885.4" cy="226.1" r="3.2" fill="#006e8a"/><circle cx="893.6" cy="230.4" r="3.2" fill="#006e8a"/><circle cx="901.9" cy="218.2" r="3.2" fill="#006e8a"/><circle cx="910.1" cy="210.3" r="3.2" fill="#006e8a"/><circle cx="918.3" cy="218.9" r="3.2" fill="#006e8a"/><circle cx="926.5" cy="223.6" r="3.2" fill="#006e8a"/><circle cx="934.7" cy="219.5" r="3.2" fill="#006e8a"/><circle cx="942.9" cy="220.2" r="3.2" fill="#006e8a"/><circle cx="951.1" cy="226.1" r="3.2" fill="#006e8a"/><circle cx="959.4" cy="227.4" r="3.2" fill="#006e8a"/><circle cx="967.6" cy="230.4" r="3.2" fill="#006e8a"/><circle cx="975.8" cy="222.5" r="3.2" fill="#006e8a"/><circle cx="984.0" cy="215.6" r="3.2" fill="#006e8a"/><circle cx="992.2" cy="217.5" r="3.2" fill="#006e8a"/><circle cx="1000.4" cy="219.5" r="3.2" fill="#006e8a"/><circle cx="1008.6" cy="220.2" r="3.2" fill="#006e8a"/><circle cx="1016.9" cy="227.7" r="3.2" fill="#006e8a"/><circle cx="1025.1" cy="218.2" r="3.2" fill="#006e8a"/><circle cx="1033.3" cy="218.9" r="3.2" fill="#006e8a"/><path d="M55.7 171.1 L63.9 142.9 L72.1 196.9 L80.4 199.2 L88.6 195.3 L96.8 188.3 L105.0 173.7 L113.2 150.8 L121.4 150.1 L129.6 165.8 L137.9 162.6 L146.1 162.6 L154.3 156.7 L162.5 168.4 L170.7 156.0 L178.9 179.6 L187.1 151.4 L195.4 164.5 L203.6 165.2 L211.8 168.4 L220.0 183.5 L228.2 182.2 L236.4 179.6 L244.7 200.5 L252.9 178.3 L261.1 188.7 L269.3 160.6 L277.5 131.1 L285.7 57.1 L293.9 177.0 L302.2 135.1 L310.4 154.7 L318.6 163.9 L326.8 166.5 L335.0 155.7 L343.2 153.1 L351.4 170.4 L359.7 175.0 L367.9 163.9 L376.1 158.6 L384.3 167.8 L392.5 192.7 L400.7 171.7 L409.0 167.8 L417.2 186.1 L425.4 183.8 L433.6 177.0 L441.8 164.5 L450.0 169.1 L458.2 184.5 L466.5 197.3 L474.7 209.7 L482.9 133.7 L491.1 168.4 L499.3 190.1 L507.5 164.5 L515.7 180.2 L524.0 176.6 L532.2 192.0 L540.4 172.4 L548.6 170.4 L556.8 163.2 L565.0 152.7 L573.3 155.4 L581.5 166.5 L589.7 155.7 L597.9 161.2 L606.1 175.0 L614.3 159.3 L622.5 176.0 L630.8 175.0 L639.0 190.1 L647.2 185.5 L655.4 194.0 L663.6 187.6 L671.8 164.5 L680.0 197.9 L688.3 184.5 L696.5 183.5 L704.7 156.7 L712.9 141.6 L721.1 150.8 L729.3 167.8 L737.6 160.6 L745.8 161.9 L754.0 166.5 L762.2 171.7 L770.4 160.6 L778.6 163.9 L786.8 164.5 L795.1 159.9 L803.3 175.3 L811.5 199.9 L819.7 192.7 L827.9 188.1 L836.1 189.4 L844.3 190.1 L852.6 204.8 L860.8 218.2 L869.0 135.7 L877.2 208.4 L885.4 195.9 L893.6 205.1 L901.9 158.0 L910.1 146.2 L918.3 165.2 L926.5 174.3 L934.7 161.9 L942.9 177.6 L951.1 173.7 L959.4 197.9 L967.6 188.7 L975.8 187.9 L984.0 157.3 L992.2 169.8 L1000.4 171.7 L1008.6 167.1 L1016.9 186.1 L1025.1 158.6 L1033.3 158.6" fill="none" stroke="#6f87d8" stroke-width="2"/><circle cx="55.7" cy="171.1" r="3.2" fill="#6f87d8"/><circle cx="63.9" cy="142.9" r="3.2" fill="#6f87d8"/><circle cx="72.1" cy="196.9" r="3.2" fill="#6f87d8"/><circle cx="80.4" cy="199.2" r="3.2" fill="#6f87d8"/><circle cx="88.6" cy="195.3" r="3.2" fill="#6f87d8"/><circle cx="96.8" cy="188.3" r="3.2" fill="#6f87d8"/><circle cx="105.0" cy="173.7" r="3.2" fill="#6f87d8"/><circle cx="113.2" cy="150.8" r="3.2" fill="#6f87d8"/><circle cx="121.4" cy="150.1" r="3.2" fill="#6f87d8"/><circle cx="129.6" cy="165.8" r="3.2" fill="#6f87d8"/><circle cx="137.9" cy="162.6" r="3.2" fill="#6f87d8"/><circle cx="146.1" cy="162.6" r="3.2" fill="#6f87d8"/><circle cx="154.3" cy="156.7" r="3.2" fill="#6f87d8"/><circle cx="162.5" cy="168.4" r="3.2" fill="#6f87d8"/><circle cx="170.7" cy="156.0" r="3.2" fill="#6f87d8"/><circle cx="178.9" cy="179.6" r="3.2" fill="#6f87d8"/><circle cx="187.1" cy="151.4" r="3.2" fill="#6f87d8"/><circle cx="195.4" cy="164.5" r="3.2" fill="#6f87d8"/><circle cx="203.6" cy="165.2" r="3.2" fill="#6f87d8"/><circle cx="211.8" cy="168.4" r="3.2" fill="#6f87d8"/><circle cx="220.0" cy="183.5" r="3.2" fill="#6f87d8"/><circle cx="228.2" cy="182.2" r="3.2" fill="#6f87d8"/><circle cx="236.4" cy="179.6" r="3.2" fill="#6f87d8"/><circle cx="244.7" cy="200.5" r="3.2" fill="#6f87d8"/><circle cx="252.9" cy="178.3" r="3.2" fill="#6f87d8"/><circle cx="261.1" cy="188.7" r="3.2" fill="#6f87d8"/><circle cx="269.3" cy="160.6" r="3.2" fill="#6f87d8"/><circle cx="277.5" cy="131.1" r="3.2" fill="#6f87d8"/><circle cx="285.7" cy="57.1" r="3.2" fill="#6f87d8"/><circle cx="293.9" cy="177.0" r="3.2" fill="#6f87d8"/><circle cx="302.2" cy="135.1" r="3.2" fill="#6f87d8"/><circle cx="310.4" cy="154.7" r="3.2" fill="#6f87d8"/><circle cx="318.6" cy="163.9" r="3.2" fill="#6f87d8"/><circle cx="326.8" cy="166.5" r="3.2" fill="#6f87d8"/><circle cx="335.0" cy="155.7" r="3.2" fill="#6f87d8"/><circle cx="343.2" cy="153.1" r="3.2" fill="#6f87d8"/><circle cx="351.4" cy="170.4" r="3.2" fill="#6f87d8"/><circle cx="359.7" cy="175.0" r="3.2" fill="#6f87d8"/><circle cx="367.9" cy="163.9" r="3.2" fill="#6f87d8"/><circle cx="376.1" cy="158.6" r="3.2" fill="#6f87d8"/><circle cx="384.3" cy="167.8" r="3.2" fill="#6f87d8"/><circle cx="392.5" cy="192.7" r="3.2" fill="#6f87d8"/><circle cx="400.7" cy="171.7" r="3.2" fill="#6f87d8"/><circle cx="409.0" cy="167.8" r="3.2" fill="#6f87d8"/><circle cx="417.2" cy="186.1" r="3.2" fill="#6f87d8"/><circle cx="425.4" cy="183.8" r="3.2" fill="#6f87d8"/><circle cx="433.6" cy="177.0" r="3.2" fill="#6f87d8"/><circle cx="441.8" cy="164.5" r="3.2" fill="#6f87d8"/><circle cx="450.0" cy="169.1" r="3.2" fill="#6f87d8"/><circle cx="458.2" cy="184.5" r="3.2" fill="#6f87d8"/><circle cx="466.5" cy="197.3" r="3.2" fill="#6f87d8"/><circle cx="474.7" cy="209.7" r="3.2" fill="#6f87d8"/><circle cx="482.9" cy="133.7" r="3.2" fill="#6f87d8"/><circle cx="491.1" cy="168.4" r="3.2" fill="#6f87d8"/><circle cx="499.3" cy="190.1" r="3.2" fill="#6f87d8"/><circle cx="507.5" cy="164.5" r="3.2" fill="#6f87d8"/><circle cx="515.7" cy="180.2" r="3.2" fill="#6f87d8"/><circle cx="524.0" cy="176.6" r="3.2" fill="#6f87d8"/><circle cx="532.2" cy="192.0" r="3.2" fill="#6f87d8"/><circle cx="540.4" cy="172.4" r="3.2" fill="#6f87d8"/><circle cx="548.6" cy="170.4" r="3.2" fill="#6f87d8"/><circle cx="556.8" cy="163.2" r="3.2" fill="#6f87d8"/><circle cx="565.0" cy="152.7" r="3.2" fill="#6f87d8"/><circle cx="573.3" cy="155.4" r="3.2" fill="#6f87d8"/><circle cx="581.5" cy="166.5" r="3.2" fill="#6f87d8"/><circle cx="589.7" cy="155.7" r="3.2" fill="#6f87d8"/><circle cx="597.9" cy="161.2" r="3.2" fill="#6f87d8"/><circle cx="606.1" cy="175.0" r="3.2" fill="#6f87d8"/><circle cx="614.3" cy="159.3" r="3.2" fill="#6f87d8"/><circle cx="622.5" cy="176.0" r="3.2" fill="#6f87d8"/><circle cx="630.8" cy="175.0" r="3.2" fill="#6f87d8"/><circle cx="639.0" cy="190.1" r="3.2" fill="#6f87d8"/><circle cx="647.2" cy="185.5" r="3.2" fill="#6f87d8"/><circle cx="655.4" cy="194.0" r="3.2" fill="#6f87d8"/><circle cx="663.6" cy="187.6" r="3.2" fill="#6f87d8"/><circle cx="671.8" cy="164.5" r="3.2" fill="#6f87d8"/><circle cx="680.0" cy="197.9" r="3.2" fill="#6f87d8"/><circle cx="688.3" cy="184.5" r="3.2" fill="#6f87d8"/><circle cx="696.5" cy="183.5" r="3.2" fill="#6f87d8"/><circle cx="704.7" cy="156.7" r="3.2" fill="#6f87d8"/><circle cx="712.9" cy="141.6" r="3.2" fill="#6f87d8"/><circle cx="721.1" cy="150.8" r="3.2" fill="#6f87d8"/><circle cx="729.3" cy="167.8" r="3.2" fill="#6f87d8"/><circle cx="737.6" cy="160.6" r="3.2" fill="#6f87d8"/><circle cx="745.8" cy="161.9" r="3.2" fill="#6f87d8"/><circle cx="754.0" cy="166.5" r="3.2" fill="#6f87d8"/><circle cx="762.2" cy="171.7" r="3.2" fill="#6f87d8"/><circle cx="770.4" cy="160.6" r="3.2" fill="#6f87d8"/><circle cx="778.6" cy="163.9" r="3.2" fill="#6f87d8"/><circle cx="786.8" cy="164.5" r="3.2" fill="#6f87d8"/><circle cx="795.1" cy="159.9" r="3.2" fill="#6f87d8"/><circle cx="803.3" cy="175.3" r="3.2" fill="#6f87d8"/><circle cx="811.5" cy="199.9" r="3.2" fill="#6f87d8"/><circle cx="819.7" cy="192.7" r="3.2" fill="#6f87d8"/><circle cx="827.9" cy="188.1" r="3.2" fill="#6f87d8"/><circle cx="836.1" cy="189.4" r="3.2" fill="#6f87d8"/><circle cx="844.3" cy="190.1" r="3.2" fill="#6f87d8"/><circle cx="852.6" cy="204.8" r="3.2" fill="#6f87d8"/><circle cx="860.8" cy="218.2" r="3.2" fill="#6f87d8"/><circle cx="869.0" cy="135.7" r="3.2" fill="#6f87d8"/><circle cx="877.2" cy="208.4" r="3.2" fill="#6f87d8"/><circle cx="885.4" cy="195.9" r="3.2" fill="#6f87d8"/><circle cx="893.6" cy="205.1" r="3.2" fill="#6f87d8"/><circle cx="901.9" cy="158.0" r="3.2" fill="#6f87d8"/><circle cx="910.1" cy="146.2" r="3.2" fill="#6f87d8"/><circle cx="918.3" cy="165.2" r="3.2" fill="#6f87d8"/><circle cx="926.5" cy="174.3" r="3.2" fill="#6f87d8"/><circle cx="934.7" cy="161.9" r="3.2" fill="#6f87d8"/><circle cx="942.9" cy="177.6" r="3.2" fill="#6f87d8"/><circle cx="951.1" cy="173.7" r="3.2" fill="#6f87d8"/><circle cx="959.4" cy="197.9" r="3.2" fill="#6f87d8"/><circle cx="967.6" cy="188.7" r="3.2" fill="#6f87d8"/><circle cx="975.8" cy="187.9" r="3.2" fill="#6f87d8"/><circle cx="984.0" cy="157.3" r="3.2" fill="#6f87d8"/><circle cx="992.2" cy="169.8" r="3.2" fill="#6f87d8"/><circle cx="1000.4" cy="171.7" r="3.2" fill="#6f87d8"/><circle cx="1008.6" cy="167.1" r="3.2" fill="#6f87d8"/><circle cx="1016.9" cy="186.1" r="3.2" fill="#6f87d8"/><circle cx="1025.1" cy="158.6" r="3.2" fill="#6f87d8"/><circle cx="1033.3" cy="158.6" r="3.2" fill="#6f87d8"/></g><text x="544" y="282" text-anchor="middle" font-family="Liberation Sans" font-size="12" font-weight="bold" fill="#7f868b">@timestamp per hour</text></svg><div class="fline" style="top:296px"></div><div class="ctab" style="left:499.0px;top:296px"><svg width="14" height="9" viewBox="0 0 14 9"><path d="M2.6 7 L7 2.6 L11.4 7" fill="none" stroke="#2b2b2b" stroke-width="2.5" stroke-linecap="round" stroke-linejoin="miter"/></svg></div></div>
</body></html>
